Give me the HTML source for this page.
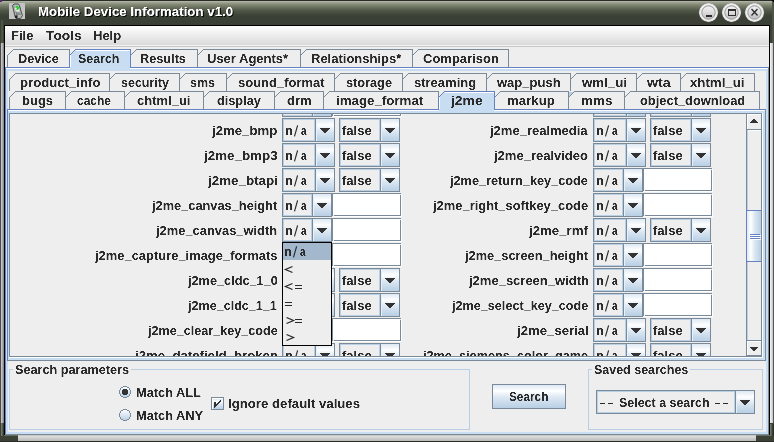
<!DOCTYPE html>
<html><head><meta charset="utf-8"><style>
html,body{margin:0;padding:0;width:774px;height:442px;overflow:hidden;background:#3c4136}
.t{position:absolute;white-space:nowrap;line-height:20px;font-family:"Liberation Sans",sans-serif;transform-origin:0 0}
.u{position:relative;top:-1px}
#vp{position:absolute;left:10px;top:114px;width:736px;height:242px;overflow:hidden}
svg{position:absolute;left:0;top:0}
</style></head><body>
<svg width="774" height="442" shape-rendering="crispEdges"><defs><linearGradient id="gTitle" x1="0" y1="0" x2="0" y2="1"><stop offset="0" stop-color="#2a2e26"/><stop offset="0.04" stop-color="#2a2e26"/><stop offset="0.04" stop-color="#b9bdb1"/><stop offset="0.08" stop-color="#a3a897"/><stop offset="0.2" stop-color="#7d8470"/><stop offset="0.4" stop-color="#535a4a"/><stop offset="0.6" stop-color="#3d4437"/><stop offset="0.68" stop-color="#3a4035"/><stop offset="1" stop-color="#3a4035"/></linearGradient><linearGradient id="gFrameL" x1="0" y1="0" x2="1" y2="0"><stop offset="0" stop-color="#cfcfcf"/><stop offset="1" stop-color="#a0a0a0"/></linearGradient><linearGradient id="gFrameR" x1="0" y1="0" x2="1" y2="0"><stop offset="0" stop-color="#f8f8f8"/><stop offset="1" stop-color="#c0c0c0"/></linearGradient><linearGradient id="gFrameB" x1="0" y1="0" x2="0" y2="1"><stop offset="0" stop-color="#a8a8a8"/><stop offset="0.15" stop-color="#e0e0e0"/><stop offset="1" stop-color="#b8b8b8"/></linearGradient><linearGradient id="gOliveL" x1="0" y1="0" x2="1" y2="0"><stop offset="0" stop-color="#7c8672"/><stop offset="1" stop-color="#4a5242"/></linearGradient><linearGradient id="gBtnIn" x1="0" y1="0" x2="0" y2="1"><stop offset="0" stop-color="#f4f4f4"/><stop offset="0.5" stop-color="#dcdcdc"/><stop offset="1" stop-color="#bcbcbc"/></linearGradient><linearGradient id="gMenu" x1="0" y1="0" x2="0" y2="1"><stop offset="0" stop-color="#ffffff"/><stop offset="1" stop-color="#dadada"/></linearGradient><linearGradient id="gOc22" x1="0" y1="0" x2="0" y2="1"><stop offset="0" stop-color="#dde8f3"/><stop offset="0.2727272727272727" stop-color="#ffffff"/><stop offset="0.5454545454545454" stop-color="#dde8f3"/><stop offset="1" stop-color="#b8cfe5"/></linearGradient><linearGradient id="gOc23" x1="0" y1="0" x2="0" y2="1"><stop offset="0" stop-color="#dde8f3"/><stop offset="0.2608695652173913" stop-color="#ffffff"/><stop offset="0.5217391304347826" stop-color="#dde8f3"/><stop offset="1" stop-color="#b8cfe5"/></linearGradient><linearGradient id="gOc21" x1="0" y1="0" x2="0" y2="1"><stop offset="0" stop-color="#dde8f3"/><stop offset="0.2857142857142857" stop-color="#ffffff"/><stop offset="0.5714285714285714" stop-color="#dde8f3"/><stop offset="1" stop-color="#b8cfe5"/></linearGradient><linearGradient id="gOcH" x1="0" y1="0" x2="1" y2="0"><stop offset="0" stop-color="#dde8f3"/><stop offset="0.26666666666666666" stop-color="#ffffff"/><stop offset="0.5333333333333333" stop-color="#dde8f3"/><stop offset="1" stop-color="#b8cfe5"/></linearGradient><linearGradient id="gOc11" x1="0" y1="0" x2="0" y2="1"><stop offset="0" stop-color="#dde8f3"/><stop offset="0.2727272727272727" stop-color="#ffffff"/><stop offset="0.5454545454545454" stop-color="#dde8f3"/><stop offset="1" stop-color="#b8cfe5"/></linearGradient><clipPath id="clipVP"><rect x="10" y="114" width="736" height="242"/></clipPath><linearGradient id="gRad" x1="0" y1="0" x2="0" y2="1"><stop offset="0" stop-color="#ffffff"/><stop offset="1" stop-color="#b8cfe5"/></linearGradient></defs><rect x="0" y="0" width="774" height="25" fill="url(#gTitle)"/><rect x="0" y="25" width="4" height="417" fill="#3c4136"/><rect x="770" y="25" width="4" height="417" fill="#3c4136"/><rect x="0" y="436" width="774" height="6" fill="#3c4136"/><rect x="0" y="43" width="1" height="380" fill="#4a4a4a"/><rect x="1" y="43" width="2" height="380" fill="url(#gFrameL)"/><rect x="3" y="43" width="1" height="380" fill="#8a8a8a"/><rect x="770" y="43" width="3" height="380" fill="url(#gFrameR)"/><rect x="773" y="43" width="1" height="380" fill="#555"/><rect x="18" y="435" width="738" height="6" fill="url(#gFrameB)"/><rect x="18" y="441" width="738" height="1" fill="#2e2e2e"/><rect x="0" y="0" width="2" height="2" fill="#5a2a6a"/><rect x="4" y="25" width="766" height="410" fill="#000"/><rect x="5" y="26" width="764" height="409" fill="#eeeeee"/><rect x="1" y="423" width="2" height="13" fill="url(#gOliveL)"/><rect x="1" y="20" width="2" height="23" fill="#4c5442"/><rect x="3" y="423" width="1" height="13" fill="#353a30"/><rect x="770" y="424" width="2" height="12" fill="url(#gOliveL)"/><rect x="773" y="424" width="1" height="12" fill="#2a2e26"/><rect x="4" y="435" width="14" height="1" fill="#667060"/><rect x="756" y="435" width="14" height="1" fill="#667060"/><rect x="0" y="441" width="774" height="1" fill="#2a2e26"/><rect x="9" y="3" width="16" height="16" fill="#c4c4c4"/><g shape-rendering="auto"><path d="M12.5 5.5 L14 4 L18.5 4 L19.5 5.5 L21.5 13 L22.5 15.5 L20.5 18.5 L16 18.5 L15 16.5 Z" fill="#b4b8b4" stroke="#4a4e4a" stroke-width="1"/><path d="M13.5 6 L15 7 L17 16 L15.5 17" fill="none" stroke="#6a6e6a" stroke-width="1"/><path d="M14.5 6 L18.5 6 L19.5 11.5 L15.5 11.5 Z" fill="#e8ece8"/><path d="M15.5 7.5 Q17 6 18.3 7.3 Q18.6 8.6 17.2 9.2 L17.2 10" fill="none" stroke="#11cc22" stroke-width="1.6"/><path d="M16 12.5 L20 12.5 L21 15 L17 15 Z" fill="#8a8e8a"/><rect x="15" y="15.5" width="2.5" height="2.5" fill="#222"/></g><radialGradient id="gBtn" cx="0.5" cy="0.5" r="0.5"><stop offset="0" stop-color="#d0d0d0"/><stop offset="0.7" stop-color="#c8c8c8"/><stop offset="0.8" stop-color="#f2f2f2"/><stop offset="0.92" stop-color="#e0e0e0"/><stop offset="1" stop-color="#808080"/></radialGradient><g shape-rendering="auto"><circle cx="708.5" cy="12.5" r="9.7" fill="url(#gBtn)"/><circle cx="708.5" cy="12.5" r="6.6" fill="url(#gBtnIn)" stroke="#a4a4a4" stroke-width="1"/></g><g shape-rendering="auto"><circle cx="731.5" cy="12.5" r="9.7" fill="url(#gBtn)"/><circle cx="731.5" cy="12.5" r="6.6" fill="url(#gBtnIn)" stroke="#a4a4a4" stroke-width="1"/></g><g shape-rendering="auto"><circle cx="754.5" cy="12.5" r="9.7" fill="url(#gBtn)"/><circle cx="754.5" cy="12.5" r="6.6" fill="url(#gBtnIn)" stroke="#a4a4a4" stroke-width="1"/></g><rect x="706" y="15" width="6" height="2" fill="#2a2a2a"/><rect x="728.5" y="9.5" width="7" height="6" fill="none" stroke="#2e2e2e" stroke-width="1"/><rect x="728" y="9" width="8" height="2" fill="#2e2e2e"/><path d="M751.5 9 L757.5 15.5 M757.5 9 L751.5 15.5" stroke="#2a2a2a" stroke-width="1.3" shape-rendering="auto"/><path d="M771 0 L774 0 L774 3 Z" fill="#000" shape-rendering="auto"/><rect x="772" y="2" width="2" height="41" fill="#4e5446"/><rect x="5" y="26" width="764" height="19" fill="url(#gMenu)"/><rect x="5" y="45" width="764" height="1" fill="#f2f2f2"/><rect x="5" y="46" width="764" height="1" fill="#c8c8c8"/><rect x="5" y="67" width="764" height="368" fill="#c8ddf2"/><rect x="5" y="67" width="764" height="1" fill="#6382bf"/><rect x="5" y="67" width="1" height="368" fill="#6382bf"/><rect x="6" y="68" width="762" height="1" fill="#ffffff"/><rect x="768" y="67" width="1" height="368" fill="#7a8a99"/><rect x="5" y="434" width="764" height="1" fill="#7a8a99"/><rect x="8" y="71" width="758" height="361" fill="#eeeeee"/><rect x="13" y="50" width="56" height="1" fill="#eeeeee"/><rect x="12" y="51" width="57" height="1" fill="#eeeeee"/><rect x="11" y="52" width="58" height="1" fill="#eeeeee"/><rect x="10" y="53" width="59" height="1" fill="#eeeeee"/><rect x="9" y="54" width="60" height="1" fill="#eeeeee"/><rect x="8" y="55" width="61" height="1" fill="#eeeeee"/><rect x="8" y="56" width="61" height="1" fill="#eeeeee"/><rect x="8" y="57" width="61" height="1" fill="#eeeeee"/><rect x="8" y="58" width="61" height="1" fill="#eeeeee"/><rect x="8" y="59" width="61" height="1" fill="#eeeeee"/><rect x="8" y="60" width="61" height="1" fill="#eeeeee"/><rect x="8" y="61" width="61" height="1" fill="#eeeeee"/><rect x="8" y="62" width="61" height="1" fill="#eeeeee"/><rect x="8" y="63" width="61" height="1" fill="#eeeeee"/><rect x="8" y="64" width="61" height="1" fill="#eeeeee"/><rect x="8" y="65" width="61" height="1" fill="#eeeeee"/><rect x="8" y="66" width="61" height="1" fill="#eeeeee"/><rect x="13" y="49" width="57" height="1" fill="#7a8a99"/><rect x="12" y="50" width="1" height="1" fill="#7a8a99"/><rect x="11" y="51" width="1" height="1" fill="#7a8a99"/><rect x="10" y="52" width="1" height="1" fill="#7a8a99"/><rect x="9" y="53" width="1" height="1" fill="#7a8a99"/><rect x="8" y="54" width="1" height="1" fill="#7a8a99"/><rect x="7" y="55" width="1" height="12" fill="#7a8a99"/><rect x="69" y="49" width="1" height="18" fill="#7a8a99"/><rect x="136" y="50" width="61" height="1" fill="#eeeeee"/><rect x="135" y="51" width="62" height="1" fill="#eeeeee"/><rect x="134" y="52" width="63" height="1" fill="#eeeeee"/><rect x="133" y="53" width="64" height="1" fill="#eeeeee"/><rect x="132" y="54" width="65" height="1" fill="#eeeeee"/><rect x="131" y="55" width="66" height="1" fill="#eeeeee"/><rect x="131" y="56" width="66" height="1" fill="#eeeeee"/><rect x="131" y="57" width="66" height="1" fill="#eeeeee"/><rect x="131" y="58" width="66" height="1" fill="#eeeeee"/><rect x="131" y="59" width="66" height="1" fill="#eeeeee"/><rect x="131" y="60" width="66" height="1" fill="#eeeeee"/><rect x="131" y="61" width="66" height="1" fill="#eeeeee"/><rect x="131" y="62" width="66" height="1" fill="#eeeeee"/><rect x="131" y="63" width="66" height="1" fill="#eeeeee"/><rect x="131" y="64" width="66" height="1" fill="#eeeeee"/><rect x="131" y="65" width="66" height="1" fill="#eeeeee"/><rect x="131" y="66" width="66" height="1" fill="#eeeeee"/><rect x="136" y="49" width="62" height="1" fill="#7a8a99"/><rect x="135" y="50" width="1" height="1" fill="#7a8a99"/><rect x="134" y="51" width="1" height="1" fill="#7a8a99"/><rect x="133" y="52" width="1" height="1" fill="#7a8a99"/><rect x="132" y="53" width="1" height="1" fill="#7a8a99"/><rect x="131" y="54" width="1" height="1" fill="#7a8a99"/><rect x="130" y="55" width="1" height="12" fill="#7a8a99"/><rect x="197" y="49" width="1" height="18" fill="#7a8a99"/><rect x="203" y="50" width="97" height="1" fill="#eeeeee"/><rect x="202" y="51" width="98" height="1" fill="#eeeeee"/><rect x="201" y="52" width="99" height="1" fill="#eeeeee"/><rect x="200" y="53" width="100" height="1" fill="#eeeeee"/><rect x="199" y="54" width="101" height="1" fill="#eeeeee"/><rect x="198" y="55" width="102" height="1" fill="#eeeeee"/><rect x="198" y="56" width="102" height="1" fill="#eeeeee"/><rect x="198" y="57" width="102" height="1" fill="#eeeeee"/><rect x="198" y="58" width="102" height="1" fill="#eeeeee"/><rect x="198" y="59" width="102" height="1" fill="#eeeeee"/><rect x="198" y="60" width="102" height="1" fill="#eeeeee"/><rect x="198" y="61" width="102" height="1" fill="#eeeeee"/><rect x="198" y="62" width="102" height="1" fill="#eeeeee"/><rect x="198" y="63" width="102" height="1" fill="#eeeeee"/><rect x="198" y="64" width="102" height="1" fill="#eeeeee"/><rect x="198" y="65" width="102" height="1" fill="#eeeeee"/><rect x="198" y="66" width="102" height="1" fill="#eeeeee"/><rect x="203" y="49" width="98" height="1" fill="#7a8a99"/><rect x="202" y="50" width="1" height="1" fill="#7a8a99"/><rect x="201" y="51" width="1" height="1" fill="#7a8a99"/><rect x="200" y="52" width="1" height="1" fill="#7a8a99"/><rect x="199" y="53" width="1" height="1" fill="#7a8a99"/><rect x="198" y="54" width="1" height="1" fill="#7a8a99"/><rect x="197" y="55" width="1" height="12" fill="#7a8a99"/><rect x="300" y="49" width="1" height="18" fill="#7a8a99"/><rect x="306" y="50" width="106" height="1" fill="#eeeeee"/><rect x="305" y="51" width="107" height="1" fill="#eeeeee"/><rect x="304" y="52" width="108" height="1" fill="#eeeeee"/><rect x="303" y="53" width="109" height="1" fill="#eeeeee"/><rect x="302" y="54" width="110" height="1" fill="#eeeeee"/><rect x="301" y="55" width="111" height="1" fill="#eeeeee"/><rect x="301" y="56" width="111" height="1" fill="#eeeeee"/><rect x="301" y="57" width="111" height="1" fill="#eeeeee"/><rect x="301" y="58" width="111" height="1" fill="#eeeeee"/><rect x="301" y="59" width="111" height="1" fill="#eeeeee"/><rect x="301" y="60" width="111" height="1" fill="#eeeeee"/><rect x="301" y="61" width="111" height="1" fill="#eeeeee"/><rect x="301" y="62" width="111" height="1" fill="#eeeeee"/><rect x="301" y="63" width="111" height="1" fill="#eeeeee"/><rect x="301" y="64" width="111" height="1" fill="#eeeeee"/><rect x="301" y="65" width="111" height="1" fill="#eeeeee"/><rect x="301" y="66" width="111" height="1" fill="#eeeeee"/><rect x="306" y="49" width="107" height="1" fill="#7a8a99"/><rect x="305" y="50" width="1" height="1" fill="#7a8a99"/><rect x="304" y="51" width="1" height="1" fill="#7a8a99"/><rect x="303" y="52" width="1" height="1" fill="#7a8a99"/><rect x="302" y="53" width="1" height="1" fill="#7a8a99"/><rect x="301" y="54" width="1" height="1" fill="#7a8a99"/><rect x="300" y="55" width="1" height="12" fill="#7a8a99"/><rect x="412" y="49" width="1" height="18" fill="#7a8a99"/><rect x="418" y="50" width="90" height="1" fill="#eeeeee"/><rect x="417" y="51" width="91" height="1" fill="#eeeeee"/><rect x="416" y="52" width="92" height="1" fill="#eeeeee"/><rect x="415" y="53" width="93" height="1" fill="#eeeeee"/><rect x="414" y="54" width="94" height="1" fill="#eeeeee"/><rect x="413" y="55" width="95" height="1" fill="#eeeeee"/><rect x="413" y="56" width="95" height="1" fill="#eeeeee"/><rect x="413" y="57" width="95" height="1" fill="#eeeeee"/><rect x="413" y="58" width="95" height="1" fill="#eeeeee"/><rect x="413" y="59" width="95" height="1" fill="#eeeeee"/><rect x="413" y="60" width="95" height="1" fill="#eeeeee"/><rect x="413" y="61" width="95" height="1" fill="#eeeeee"/><rect x="413" y="62" width="95" height="1" fill="#eeeeee"/><rect x="413" y="63" width="95" height="1" fill="#eeeeee"/><rect x="413" y="64" width="95" height="1" fill="#eeeeee"/><rect x="413" y="65" width="95" height="1" fill="#eeeeee"/><rect x="413" y="66" width="95" height="1" fill="#eeeeee"/><rect x="418" y="49" width="91" height="1" fill="#7a8a99"/><rect x="417" y="50" width="1" height="1" fill="#7a8a99"/><rect x="416" y="51" width="1" height="1" fill="#7a8a99"/><rect x="415" y="52" width="1" height="1" fill="#7a8a99"/><rect x="414" y="53" width="1" height="1" fill="#7a8a99"/><rect x="413" y="54" width="1" height="1" fill="#7a8a99"/><rect x="412" y="55" width="1" height="12" fill="#7a8a99"/><rect x="508" y="49" width="1" height="18" fill="#7a8a99"/><rect x="75" y="50" width="55" height="1" fill="#c8ddf2"/><rect x="74" y="51" width="56" height="1" fill="#c8ddf2"/><rect x="73" y="52" width="57" height="1" fill="#c8ddf2"/><rect x="72" y="53" width="58" height="1" fill="#c8ddf2"/><rect x="71" y="54" width="59" height="1" fill="#c8ddf2"/><rect x="70" y="55" width="60" height="1" fill="#c8ddf2"/><rect x="70" y="56" width="60" height="1" fill="#c8ddf2"/><rect x="70" y="57" width="60" height="1" fill="#c8ddf2"/><rect x="70" y="58" width="60" height="1" fill="#c8ddf2"/><rect x="70" y="59" width="60" height="1" fill="#c8ddf2"/><rect x="70" y="60" width="60" height="1" fill="#c8ddf2"/><rect x="70" y="61" width="60" height="1" fill="#c8ddf2"/><rect x="70" y="62" width="60" height="1" fill="#c8ddf2"/><rect x="70" y="63" width="60" height="1" fill="#c8ddf2"/><rect x="70" y="64" width="60" height="1" fill="#c8ddf2"/><rect x="70" y="65" width="60" height="1" fill="#c8ddf2"/><rect x="70" y="66" width="60" height="1" fill="#c8ddf2"/><rect x="70" y="67" width="60" height="1" fill="#c8ddf2"/><rect x="75" y="49" width="56" height="1" fill="#6382bf"/><rect x="74" y="50" width="1" height="1" fill="#6382bf"/><rect x="73" y="51" width="1" height="1" fill="#6382bf"/><rect x="72" y="52" width="1" height="1" fill="#6382bf"/><rect x="71" y="53" width="1" height="1" fill="#6382bf"/><rect x="70" y="54" width="1" height="1" fill="#6382bf"/><rect x="69" y="55" width="1" height="13" fill="#6382bf"/><rect x="130" y="49" width="1" height="19" fill="#6382bf"/><rect x="76" y="50" width="54" height="1" fill="#ffffff"/><rect x="70" y="55" width="1" height="14" fill="#ffffff"/><rect x="70" y="67" width="60" height="3" fill="#c8ddf2"/><rect x="6" y="69" width="762" height="2" fill="#c8ddf2"/><rect x="6" y="69" width="1" height="365" fill="#c8ddf2"/><rect x="766" y="69" width="1" height="365" fill="#c8ddf2"/><rect x="767" y="69" width="1" height="365" fill="#c8ddf2"/><rect x="6" y="432" width="762" height="2" fill="#c8ddf2"/><rect x="7" y="109" width="759" height="252" fill="#c8ddf2"/><rect x="7" y="109" width="759" height="1" fill="#6382bf"/><rect x="7" y="109" width="1" height="252" fill="#6382bf"/><rect x="8" y="110" width="757" height="1" fill="#ffffff"/><rect x="765" y="109" width="1" height="252" fill="#7a8a99"/><rect x="7" y="360" width="759" height="1" fill="#7a8a99"/><rect x="15" y="74" width="94" height="1" fill="#eeeeee"/><rect x="14" y="75" width="95" height="1" fill="#eeeeee"/><rect x="13" y="76" width="96" height="1" fill="#eeeeee"/><rect x="12" y="77" width="97" height="1" fill="#eeeeee"/><rect x="11" y="78" width="98" height="1" fill="#eeeeee"/><rect x="10" y="79" width="99" height="1" fill="#eeeeee"/><rect x="10" y="80" width="99" height="1" fill="#eeeeee"/><rect x="10" y="81" width="99" height="1" fill="#eeeeee"/><rect x="10" y="82" width="99" height="1" fill="#eeeeee"/><rect x="10" y="83" width="99" height="1" fill="#eeeeee"/><rect x="10" y="84" width="99" height="1" fill="#eeeeee"/><rect x="10" y="85" width="99" height="1" fill="#eeeeee"/><rect x="10" y="86" width="99" height="1" fill="#eeeeee"/><rect x="10" y="87" width="99" height="1" fill="#eeeeee"/><rect x="10" y="88" width="99" height="1" fill="#eeeeee"/><rect x="10" y="89" width="99" height="1" fill="#eeeeee"/><rect x="10" y="90" width="99" height="1" fill="#eeeeee"/><rect x="15" y="73" width="95" height="1" fill="#7a8a99"/><rect x="14" y="74" width="1" height="1" fill="#7a8a99"/><rect x="13" y="75" width="1" height="1" fill="#7a8a99"/><rect x="12" y="76" width="1" height="1" fill="#7a8a99"/><rect x="11" y="77" width="1" height="1" fill="#7a8a99"/><rect x="10" y="78" width="1" height="1" fill="#7a8a99"/><rect x="9" y="79" width="1" height="12" fill="#7a8a99"/><rect x="109" y="73" width="1" height="18" fill="#7a8a99"/><rect x="115" y="74" width="64" height="1" fill="#eeeeee"/><rect x="114" y="75" width="65" height="1" fill="#eeeeee"/><rect x="113" y="76" width="66" height="1" fill="#eeeeee"/><rect x="112" y="77" width="67" height="1" fill="#eeeeee"/><rect x="111" y="78" width="68" height="1" fill="#eeeeee"/><rect x="110" y="79" width="69" height="1" fill="#eeeeee"/><rect x="110" y="80" width="69" height="1" fill="#eeeeee"/><rect x="110" y="81" width="69" height="1" fill="#eeeeee"/><rect x="110" y="82" width="69" height="1" fill="#eeeeee"/><rect x="110" y="83" width="69" height="1" fill="#eeeeee"/><rect x="110" y="84" width="69" height="1" fill="#eeeeee"/><rect x="110" y="85" width="69" height="1" fill="#eeeeee"/><rect x="110" y="86" width="69" height="1" fill="#eeeeee"/><rect x="110" y="87" width="69" height="1" fill="#eeeeee"/><rect x="110" y="88" width="69" height="1" fill="#eeeeee"/><rect x="110" y="89" width="69" height="1" fill="#eeeeee"/><rect x="110" y="90" width="69" height="1" fill="#eeeeee"/><rect x="115" y="73" width="65" height="1" fill="#7a8a99"/><rect x="114" y="74" width="1" height="1" fill="#7a8a99"/><rect x="113" y="75" width="1" height="1" fill="#7a8a99"/><rect x="112" y="76" width="1" height="1" fill="#7a8a99"/><rect x="111" y="77" width="1" height="1" fill="#7a8a99"/><rect x="110" y="78" width="1" height="1" fill="#7a8a99"/><rect x="109" y="79" width="1" height="12" fill="#7a8a99"/><rect x="179" y="73" width="1" height="18" fill="#7a8a99"/><rect x="185" y="74" width="41" height="1" fill="#eeeeee"/><rect x="184" y="75" width="42" height="1" fill="#eeeeee"/><rect x="183" y="76" width="43" height="1" fill="#eeeeee"/><rect x="182" y="77" width="44" height="1" fill="#eeeeee"/><rect x="181" y="78" width="45" height="1" fill="#eeeeee"/><rect x="180" y="79" width="46" height="1" fill="#eeeeee"/><rect x="180" y="80" width="46" height="1" fill="#eeeeee"/><rect x="180" y="81" width="46" height="1" fill="#eeeeee"/><rect x="180" y="82" width="46" height="1" fill="#eeeeee"/><rect x="180" y="83" width="46" height="1" fill="#eeeeee"/><rect x="180" y="84" width="46" height="1" fill="#eeeeee"/><rect x="180" y="85" width="46" height="1" fill="#eeeeee"/><rect x="180" y="86" width="46" height="1" fill="#eeeeee"/><rect x="180" y="87" width="46" height="1" fill="#eeeeee"/><rect x="180" y="88" width="46" height="1" fill="#eeeeee"/><rect x="180" y="89" width="46" height="1" fill="#eeeeee"/><rect x="180" y="90" width="46" height="1" fill="#eeeeee"/><rect x="185" y="73" width="42" height="1" fill="#7a8a99"/><rect x="184" y="74" width="1" height="1" fill="#7a8a99"/><rect x="183" y="75" width="1" height="1" fill="#7a8a99"/><rect x="182" y="76" width="1" height="1" fill="#7a8a99"/><rect x="181" y="77" width="1" height="1" fill="#7a8a99"/><rect x="180" y="78" width="1" height="1" fill="#7a8a99"/><rect x="179" y="79" width="1" height="12" fill="#7a8a99"/><rect x="226" y="73" width="1" height="18" fill="#7a8a99"/><rect x="232" y="74" width="102" height="1" fill="#eeeeee"/><rect x="231" y="75" width="103" height="1" fill="#eeeeee"/><rect x="230" y="76" width="104" height="1" fill="#eeeeee"/><rect x="229" y="77" width="105" height="1" fill="#eeeeee"/><rect x="228" y="78" width="106" height="1" fill="#eeeeee"/><rect x="227" y="79" width="107" height="1" fill="#eeeeee"/><rect x="227" y="80" width="107" height="1" fill="#eeeeee"/><rect x="227" y="81" width="107" height="1" fill="#eeeeee"/><rect x="227" y="82" width="107" height="1" fill="#eeeeee"/><rect x="227" y="83" width="107" height="1" fill="#eeeeee"/><rect x="227" y="84" width="107" height="1" fill="#eeeeee"/><rect x="227" y="85" width="107" height="1" fill="#eeeeee"/><rect x="227" y="86" width="107" height="1" fill="#eeeeee"/><rect x="227" y="87" width="107" height="1" fill="#eeeeee"/><rect x="227" y="88" width="107" height="1" fill="#eeeeee"/><rect x="227" y="89" width="107" height="1" fill="#eeeeee"/><rect x="227" y="90" width="107" height="1" fill="#eeeeee"/><rect x="232" y="73" width="103" height="1" fill="#7a8a99"/><rect x="231" y="74" width="1" height="1" fill="#7a8a99"/><rect x="230" y="75" width="1" height="1" fill="#7a8a99"/><rect x="229" y="76" width="1" height="1" fill="#7a8a99"/><rect x="228" y="77" width="1" height="1" fill="#7a8a99"/><rect x="227" y="78" width="1" height="1" fill="#7a8a99"/><rect x="226" y="79" width="1" height="12" fill="#7a8a99"/><rect x="334" y="73" width="1" height="18" fill="#7a8a99"/><rect x="340" y="74" width="62" height="1" fill="#eeeeee"/><rect x="339" y="75" width="63" height="1" fill="#eeeeee"/><rect x="338" y="76" width="64" height="1" fill="#eeeeee"/><rect x="337" y="77" width="65" height="1" fill="#eeeeee"/><rect x="336" y="78" width="66" height="1" fill="#eeeeee"/><rect x="335" y="79" width="67" height="1" fill="#eeeeee"/><rect x="335" y="80" width="67" height="1" fill="#eeeeee"/><rect x="335" y="81" width="67" height="1" fill="#eeeeee"/><rect x="335" y="82" width="67" height="1" fill="#eeeeee"/><rect x="335" y="83" width="67" height="1" fill="#eeeeee"/><rect x="335" y="84" width="67" height="1" fill="#eeeeee"/><rect x="335" y="85" width="67" height="1" fill="#eeeeee"/><rect x="335" y="86" width="67" height="1" fill="#eeeeee"/><rect x="335" y="87" width="67" height="1" fill="#eeeeee"/><rect x="335" y="88" width="67" height="1" fill="#eeeeee"/><rect x="335" y="89" width="67" height="1" fill="#eeeeee"/><rect x="335" y="90" width="67" height="1" fill="#eeeeee"/><rect x="340" y="73" width="63" height="1" fill="#7a8a99"/><rect x="339" y="74" width="1" height="1" fill="#7a8a99"/><rect x="338" y="75" width="1" height="1" fill="#7a8a99"/><rect x="337" y="76" width="1" height="1" fill="#7a8a99"/><rect x="336" y="77" width="1" height="1" fill="#7a8a99"/><rect x="335" y="78" width="1" height="1" fill="#7a8a99"/><rect x="334" y="79" width="1" height="12" fill="#7a8a99"/><rect x="402" y="73" width="1" height="18" fill="#7a8a99"/><rect x="408" y="74" width="78" height="1" fill="#eeeeee"/><rect x="407" y="75" width="79" height="1" fill="#eeeeee"/><rect x="406" y="76" width="80" height="1" fill="#eeeeee"/><rect x="405" y="77" width="81" height="1" fill="#eeeeee"/><rect x="404" y="78" width="82" height="1" fill="#eeeeee"/><rect x="403" y="79" width="83" height="1" fill="#eeeeee"/><rect x="403" y="80" width="83" height="1" fill="#eeeeee"/><rect x="403" y="81" width="83" height="1" fill="#eeeeee"/><rect x="403" y="82" width="83" height="1" fill="#eeeeee"/><rect x="403" y="83" width="83" height="1" fill="#eeeeee"/><rect x="403" y="84" width="83" height="1" fill="#eeeeee"/><rect x="403" y="85" width="83" height="1" fill="#eeeeee"/><rect x="403" y="86" width="83" height="1" fill="#eeeeee"/><rect x="403" y="87" width="83" height="1" fill="#eeeeee"/><rect x="403" y="88" width="83" height="1" fill="#eeeeee"/><rect x="403" y="89" width="83" height="1" fill="#eeeeee"/><rect x="403" y="90" width="83" height="1" fill="#eeeeee"/><rect x="408" y="73" width="79" height="1" fill="#7a8a99"/><rect x="407" y="74" width="1" height="1" fill="#7a8a99"/><rect x="406" y="75" width="1" height="1" fill="#7a8a99"/><rect x="405" y="76" width="1" height="1" fill="#7a8a99"/><rect x="404" y="77" width="1" height="1" fill="#7a8a99"/><rect x="403" y="78" width="1" height="1" fill="#7a8a99"/><rect x="402" y="79" width="1" height="12" fill="#7a8a99"/><rect x="486" y="73" width="1" height="18" fill="#7a8a99"/><rect x="492" y="74" width="78" height="1" fill="#eeeeee"/><rect x="491" y="75" width="79" height="1" fill="#eeeeee"/><rect x="490" y="76" width="80" height="1" fill="#eeeeee"/><rect x="489" y="77" width="81" height="1" fill="#eeeeee"/><rect x="488" y="78" width="82" height="1" fill="#eeeeee"/><rect x="487" y="79" width="83" height="1" fill="#eeeeee"/><rect x="487" y="80" width="83" height="1" fill="#eeeeee"/><rect x="487" y="81" width="83" height="1" fill="#eeeeee"/><rect x="487" y="82" width="83" height="1" fill="#eeeeee"/><rect x="487" y="83" width="83" height="1" fill="#eeeeee"/><rect x="487" y="84" width="83" height="1" fill="#eeeeee"/><rect x="487" y="85" width="83" height="1" fill="#eeeeee"/><rect x="487" y="86" width="83" height="1" fill="#eeeeee"/><rect x="487" y="87" width="83" height="1" fill="#eeeeee"/><rect x="487" y="88" width="83" height="1" fill="#eeeeee"/><rect x="487" y="89" width="83" height="1" fill="#eeeeee"/><rect x="487" y="90" width="83" height="1" fill="#eeeeee"/><rect x="492" y="73" width="79" height="1" fill="#7a8a99"/><rect x="491" y="74" width="1" height="1" fill="#7a8a99"/><rect x="490" y="75" width="1" height="1" fill="#7a8a99"/><rect x="489" y="76" width="1" height="1" fill="#7a8a99"/><rect x="488" y="77" width="1" height="1" fill="#7a8a99"/><rect x="487" y="78" width="1" height="1" fill="#7a8a99"/><rect x="486" y="79" width="1" height="12" fill="#7a8a99"/><rect x="570" y="73" width="1" height="18" fill="#7a8a99"/><rect x="576" y="74" width="60" height="1" fill="#eeeeee"/><rect x="575" y="75" width="61" height="1" fill="#eeeeee"/><rect x="574" y="76" width="62" height="1" fill="#eeeeee"/><rect x="573" y="77" width="63" height="1" fill="#eeeeee"/><rect x="572" y="78" width="64" height="1" fill="#eeeeee"/><rect x="571" y="79" width="65" height="1" fill="#eeeeee"/><rect x="571" y="80" width="65" height="1" fill="#eeeeee"/><rect x="571" y="81" width="65" height="1" fill="#eeeeee"/><rect x="571" y="82" width="65" height="1" fill="#eeeeee"/><rect x="571" y="83" width="65" height="1" fill="#eeeeee"/><rect x="571" y="84" width="65" height="1" fill="#eeeeee"/><rect x="571" y="85" width="65" height="1" fill="#eeeeee"/><rect x="571" y="86" width="65" height="1" fill="#eeeeee"/><rect x="571" y="87" width="65" height="1" fill="#eeeeee"/><rect x="571" y="88" width="65" height="1" fill="#eeeeee"/><rect x="571" y="89" width="65" height="1" fill="#eeeeee"/><rect x="571" y="90" width="65" height="1" fill="#eeeeee"/><rect x="576" y="73" width="61" height="1" fill="#7a8a99"/><rect x="575" y="74" width="1" height="1" fill="#7a8a99"/><rect x="574" y="75" width="1" height="1" fill="#7a8a99"/><rect x="573" y="76" width="1" height="1" fill="#7a8a99"/><rect x="572" y="77" width="1" height="1" fill="#7a8a99"/><rect x="571" y="78" width="1" height="1" fill="#7a8a99"/><rect x="570" y="79" width="1" height="12" fill="#7a8a99"/><rect x="636" y="73" width="1" height="18" fill="#7a8a99"/><rect x="642" y="74" width="38" height="1" fill="#eeeeee"/><rect x="641" y="75" width="39" height="1" fill="#eeeeee"/><rect x="640" y="76" width="40" height="1" fill="#eeeeee"/><rect x="639" y="77" width="41" height="1" fill="#eeeeee"/><rect x="638" y="78" width="42" height="1" fill="#eeeeee"/><rect x="637" y="79" width="43" height="1" fill="#eeeeee"/><rect x="637" y="80" width="43" height="1" fill="#eeeeee"/><rect x="637" y="81" width="43" height="1" fill="#eeeeee"/><rect x="637" y="82" width="43" height="1" fill="#eeeeee"/><rect x="637" y="83" width="43" height="1" fill="#eeeeee"/><rect x="637" y="84" width="43" height="1" fill="#eeeeee"/><rect x="637" y="85" width="43" height="1" fill="#eeeeee"/><rect x="637" y="86" width="43" height="1" fill="#eeeeee"/><rect x="637" y="87" width="43" height="1" fill="#eeeeee"/><rect x="637" y="88" width="43" height="1" fill="#eeeeee"/><rect x="637" y="89" width="43" height="1" fill="#eeeeee"/><rect x="637" y="90" width="43" height="1" fill="#eeeeee"/><rect x="642" y="73" width="39" height="1" fill="#7a8a99"/><rect x="641" y="74" width="1" height="1" fill="#7a8a99"/><rect x="640" y="75" width="1" height="1" fill="#7a8a99"/><rect x="639" y="76" width="1" height="1" fill="#7a8a99"/><rect x="638" y="77" width="1" height="1" fill="#7a8a99"/><rect x="637" y="78" width="1" height="1" fill="#7a8a99"/><rect x="636" y="79" width="1" height="12" fill="#7a8a99"/><rect x="680" y="73" width="1" height="18" fill="#7a8a99"/><rect x="686" y="74" width="68" height="1" fill="#eeeeee"/><rect x="685" y="75" width="69" height="1" fill="#eeeeee"/><rect x="684" y="76" width="70" height="1" fill="#eeeeee"/><rect x="683" y="77" width="71" height="1" fill="#eeeeee"/><rect x="682" y="78" width="72" height="1" fill="#eeeeee"/><rect x="681" y="79" width="73" height="1" fill="#eeeeee"/><rect x="681" y="80" width="73" height="1" fill="#eeeeee"/><rect x="681" y="81" width="73" height="1" fill="#eeeeee"/><rect x="681" y="82" width="73" height="1" fill="#eeeeee"/><rect x="681" y="83" width="73" height="1" fill="#eeeeee"/><rect x="681" y="84" width="73" height="1" fill="#eeeeee"/><rect x="681" y="85" width="73" height="1" fill="#eeeeee"/><rect x="681" y="86" width="73" height="1" fill="#eeeeee"/><rect x="681" y="87" width="73" height="1" fill="#eeeeee"/><rect x="681" y="88" width="73" height="1" fill="#eeeeee"/><rect x="681" y="89" width="73" height="1" fill="#eeeeee"/><rect x="681" y="90" width="73" height="1" fill="#eeeeee"/><rect x="686" y="73" width="69" height="1" fill="#7a8a99"/><rect x="685" y="74" width="1" height="1" fill="#7a8a99"/><rect x="684" y="75" width="1" height="1" fill="#7a8a99"/><rect x="683" y="76" width="1" height="1" fill="#7a8a99"/><rect x="682" y="77" width="1" height="1" fill="#7a8a99"/><rect x="681" y="78" width="1" height="1" fill="#7a8a99"/><rect x="680" y="79" width="1" height="12" fill="#7a8a99"/><rect x="754" y="73" width="1" height="18" fill="#7a8a99"/><rect x="15" y="92" width="50" height="1" fill="#eeeeee"/><rect x="14" y="93" width="51" height="1" fill="#eeeeee"/><rect x="13" y="94" width="52" height="1" fill="#eeeeee"/><rect x="12" y="95" width="53" height="1" fill="#eeeeee"/><rect x="11" y="96" width="54" height="1" fill="#eeeeee"/><rect x="10" y="97" width="55" height="1" fill="#eeeeee"/><rect x="10" y="98" width="55" height="1" fill="#eeeeee"/><rect x="10" y="99" width="55" height="1" fill="#eeeeee"/><rect x="10" y="100" width="55" height="1" fill="#eeeeee"/><rect x="10" y="101" width="55" height="1" fill="#eeeeee"/><rect x="10" y="102" width="55" height="1" fill="#eeeeee"/><rect x="10" y="103" width="55" height="1" fill="#eeeeee"/><rect x="10" y="104" width="55" height="1" fill="#eeeeee"/><rect x="10" y="105" width="55" height="1" fill="#eeeeee"/><rect x="10" y="106" width="55" height="1" fill="#eeeeee"/><rect x="10" y="107" width="55" height="1" fill="#eeeeee"/><rect x="10" y="108" width="55" height="1" fill="#eeeeee"/><rect x="15" y="91" width="51" height="1" fill="#7a8a99"/><rect x="14" y="92" width="1" height="1" fill="#7a8a99"/><rect x="13" y="93" width="1" height="1" fill="#7a8a99"/><rect x="12" y="94" width="1" height="1" fill="#7a8a99"/><rect x="11" y="95" width="1" height="1" fill="#7a8a99"/><rect x="10" y="96" width="1" height="1" fill="#7a8a99"/><rect x="9" y="97" width="1" height="12" fill="#7a8a99"/><rect x="65" y="91" width="1" height="18" fill="#7a8a99"/><rect x="71" y="92" width="53" height="1" fill="#eeeeee"/><rect x="70" y="93" width="54" height="1" fill="#eeeeee"/><rect x="69" y="94" width="55" height="1" fill="#eeeeee"/><rect x="68" y="95" width="56" height="1" fill="#eeeeee"/><rect x="67" y="96" width="57" height="1" fill="#eeeeee"/><rect x="66" y="97" width="58" height="1" fill="#eeeeee"/><rect x="66" y="98" width="58" height="1" fill="#eeeeee"/><rect x="66" y="99" width="58" height="1" fill="#eeeeee"/><rect x="66" y="100" width="58" height="1" fill="#eeeeee"/><rect x="66" y="101" width="58" height="1" fill="#eeeeee"/><rect x="66" y="102" width="58" height="1" fill="#eeeeee"/><rect x="66" y="103" width="58" height="1" fill="#eeeeee"/><rect x="66" y="104" width="58" height="1" fill="#eeeeee"/><rect x="66" y="105" width="58" height="1" fill="#eeeeee"/><rect x="66" y="106" width="58" height="1" fill="#eeeeee"/><rect x="66" y="107" width="58" height="1" fill="#eeeeee"/><rect x="66" y="108" width="58" height="1" fill="#eeeeee"/><rect x="71" y="91" width="54" height="1" fill="#7a8a99"/><rect x="70" y="92" width="1" height="1" fill="#7a8a99"/><rect x="69" y="93" width="1" height="1" fill="#7a8a99"/><rect x="68" y="94" width="1" height="1" fill="#7a8a99"/><rect x="67" y="95" width="1" height="1" fill="#7a8a99"/><rect x="66" y="96" width="1" height="1" fill="#7a8a99"/><rect x="65" y="97" width="1" height="12" fill="#7a8a99"/><rect x="124" y="91" width="1" height="18" fill="#7a8a99"/><rect x="130" y="92" width="73" height="1" fill="#eeeeee"/><rect x="129" y="93" width="74" height="1" fill="#eeeeee"/><rect x="128" y="94" width="75" height="1" fill="#eeeeee"/><rect x="127" y="95" width="76" height="1" fill="#eeeeee"/><rect x="126" y="96" width="77" height="1" fill="#eeeeee"/><rect x="125" y="97" width="78" height="1" fill="#eeeeee"/><rect x="125" y="98" width="78" height="1" fill="#eeeeee"/><rect x="125" y="99" width="78" height="1" fill="#eeeeee"/><rect x="125" y="100" width="78" height="1" fill="#eeeeee"/><rect x="125" y="101" width="78" height="1" fill="#eeeeee"/><rect x="125" y="102" width="78" height="1" fill="#eeeeee"/><rect x="125" y="103" width="78" height="1" fill="#eeeeee"/><rect x="125" y="104" width="78" height="1" fill="#eeeeee"/><rect x="125" y="105" width="78" height="1" fill="#eeeeee"/><rect x="125" y="106" width="78" height="1" fill="#eeeeee"/><rect x="125" y="107" width="78" height="1" fill="#eeeeee"/><rect x="125" y="108" width="78" height="1" fill="#eeeeee"/><rect x="130" y="91" width="74" height="1" fill="#7a8a99"/><rect x="129" y="92" width="1" height="1" fill="#7a8a99"/><rect x="128" y="93" width="1" height="1" fill="#7a8a99"/><rect x="127" y="94" width="1" height="1" fill="#7a8a99"/><rect x="126" y="95" width="1" height="1" fill="#7a8a99"/><rect x="125" y="96" width="1" height="1" fill="#7a8a99"/><rect x="124" y="97" width="1" height="12" fill="#7a8a99"/><rect x="203" y="91" width="1" height="18" fill="#7a8a99"/><rect x="209" y="92" width="65" height="1" fill="#eeeeee"/><rect x="208" y="93" width="66" height="1" fill="#eeeeee"/><rect x="207" y="94" width="67" height="1" fill="#eeeeee"/><rect x="206" y="95" width="68" height="1" fill="#eeeeee"/><rect x="205" y="96" width="69" height="1" fill="#eeeeee"/><rect x="204" y="97" width="70" height="1" fill="#eeeeee"/><rect x="204" y="98" width="70" height="1" fill="#eeeeee"/><rect x="204" y="99" width="70" height="1" fill="#eeeeee"/><rect x="204" y="100" width="70" height="1" fill="#eeeeee"/><rect x="204" y="101" width="70" height="1" fill="#eeeeee"/><rect x="204" y="102" width="70" height="1" fill="#eeeeee"/><rect x="204" y="103" width="70" height="1" fill="#eeeeee"/><rect x="204" y="104" width="70" height="1" fill="#eeeeee"/><rect x="204" y="105" width="70" height="1" fill="#eeeeee"/><rect x="204" y="106" width="70" height="1" fill="#eeeeee"/><rect x="204" y="107" width="70" height="1" fill="#eeeeee"/><rect x="204" y="108" width="70" height="1" fill="#eeeeee"/><rect x="209" y="91" width="66" height="1" fill="#7a8a99"/><rect x="208" y="92" width="1" height="1" fill="#7a8a99"/><rect x="207" y="93" width="1" height="1" fill="#7a8a99"/><rect x="206" y="94" width="1" height="1" fill="#7a8a99"/><rect x="205" y="95" width="1" height="1" fill="#7a8a99"/><rect x="204" y="96" width="1" height="1" fill="#7a8a99"/><rect x="203" y="97" width="1" height="12" fill="#7a8a99"/><rect x="274" y="91" width="1" height="18" fill="#7a8a99"/><rect x="280" y="92" width="43" height="1" fill="#eeeeee"/><rect x="279" y="93" width="44" height="1" fill="#eeeeee"/><rect x="278" y="94" width="45" height="1" fill="#eeeeee"/><rect x="277" y="95" width="46" height="1" fill="#eeeeee"/><rect x="276" y="96" width="47" height="1" fill="#eeeeee"/><rect x="275" y="97" width="48" height="1" fill="#eeeeee"/><rect x="275" y="98" width="48" height="1" fill="#eeeeee"/><rect x="275" y="99" width="48" height="1" fill="#eeeeee"/><rect x="275" y="100" width="48" height="1" fill="#eeeeee"/><rect x="275" y="101" width="48" height="1" fill="#eeeeee"/><rect x="275" y="102" width="48" height="1" fill="#eeeeee"/><rect x="275" y="103" width="48" height="1" fill="#eeeeee"/><rect x="275" y="104" width="48" height="1" fill="#eeeeee"/><rect x="275" y="105" width="48" height="1" fill="#eeeeee"/><rect x="275" y="106" width="48" height="1" fill="#eeeeee"/><rect x="275" y="107" width="48" height="1" fill="#eeeeee"/><rect x="275" y="108" width="48" height="1" fill="#eeeeee"/><rect x="280" y="91" width="44" height="1" fill="#7a8a99"/><rect x="279" y="92" width="1" height="1" fill="#7a8a99"/><rect x="278" y="93" width="1" height="1" fill="#7a8a99"/><rect x="277" y="94" width="1" height="1" fill="#7a8a99"/><rect x="276" y="95" width="1" height="1" fill="#7a8a99"/><rect x="275" y="96" width="1" height="1" fill="#7a8a99"/><rect x="274" y="97" width="1" height="12" fill="#7a8a99"/><rect x="323" y="91" width="1" height="18" fill="#7a8a99"/><rect x="329" y="92" width="109" height="1" fill="#eeeeee"/><rect x="328" y="93" width="110" height="1" fill="#eeeeee"/><rect x="327" y="94" width="111" height="1" fill="#eeeeee"/><rect x="326" y="95" width="112" height="1" fill="#eeeeee"/><rect x="325" y="96" width="113" height="1" fill="#eeeeee"/><rect x="324" y="97" width="114" height="1" fill="#eeeeee"/><rect x="324" y="98" width="114" height="1" fill="#eeeeee"/><rect x="324" y="99" width="114" height="1" fill="#eeeeee"/><rect x="324" y="100" width="114" height="1" fill="#eeeeee"/><rect x="324" y="101" width="114" height="1" fill="#eeeeee"/><rect x="324" y="102" width="114" height="1" fill="#eeeeee"/><rect x="324" y="103" width="114" height="1" fill="#eeeeee"/><rect x="324" y="104" width="114" height="1" fill="#eeeeee"/><rect x="324" y="105" width="114" height="1" fill="#eeeeee"/><rect x="324" y="106" width="114" height="1" fill="#eeeeee"/><rect x="324" y="107" width="114" height="1" fill="#eeeeee"/><rect x="324" y="108" width="114" height="1" fill="#eeeeee"/><rect x="329" y="91" width="110" height="1" fill="#7a8a99"/><rect x="328" y="92" width="1" height="1" fill="#7a8a99"/><rect x="327" y="93" width="1" height="1" fill="#7a8a99"/><rect x="326" y="94" width="1" height="1" fill="#7a8a99"/><rect x="325" y="95" width="1" height="1" fill="#7a8a99"/><rect x="324" y="96" width="1" height="1" fill="#7a8a99"/><rect x="323" y="97" width="1" height="12" fill="#7a8a99"/><rect x="438" y="91" width="1" height="18" fill="#7a8a99"/><rect x="500" y="92" width="68" height="1" fill="#eeeeee"/><rect x="499" y="93" width="69" height="1" fill="#eeeeee"/><rect x="498" y="94" width="70" height="1" fill="#eeeeee"/><rect x="497" y="95" width="71" height="1" fill="#eeeeee"/><rect x="496" y="96" width="72" height="1" fill="#eeeeee"/><rect x="495" y="97" width="73" height="1" fill="#eeeeee"/><rect x="495" y="98" width="73" height="1" fill="#eeeeee"/><rect x="495" y="99" width="73" height="1" fill="#eeeeee"/><rect x="495" y="100" width="73" height="1" fill="#eeeeee"/><rect x="495" y="101" width="73" height="1" fill="#eeeeee"/><rect x="495" y="102" width="73" height="1" fill="#eeeeee"/><rect x="495" y="103" width="73" height="1" fill="#eeeeee"/><rect x="495" y="104" width="73" height="1" fill="#eeeeee"/><rect x="495" y="105" width="73" height="1" fill="#eeeeee"/><rect x="495" y="106" width="73" height="1" fill="#eeeeee"/><rect x="495" y="107" width="73" height="1" fill="#eeeeee"/><rect x="495" y="108" width="73" height="1" fill="#eeeeee"/><rect x="500" y="91" width="69" height="1" fill="#7a8a99"/><rect x="499" y="92" width="1" height="1" fill="#7a8a99"/><rect x="498" y="93" width="1" height="1" fill="#7a8a99"/><rect x="497" y="94" width="1" height="1" fill="#7a8a99"/><rect x="496" y="95" width="1" height="1" fill="#7a8a99"/><rect x="495" y="96" width="1" height="1" fill="#7a8a99"/><rect x="494" y="97" width="1" height="12" fill="#7a8a99"/><rect x="568" y="91" width="1" height="18" fill="#7a8a99"/><rect x="574" y="92" width="50" height="1" fill="#eeeeee"/><rect x="573" y="93" width="51" height="1" fill="#eeeeee"/><rect x="572" y="94" width="52" height="1" fill="#eeeeee"/><rect x="571" y="95" width="53" height="1" fill="#eeeeee"/><rect x="570" y="96" width="54" height="1" fill="#eeeeee"/><rect x="569" y="97" width="55" height="1" fill="#eeeeee"/><rect x="569" y="98" width="55" height="1" fill="#eeeeee"/><rect x="569" y="99" width="55" height="1" fill="#eeeeee"/><rect x="569" y="100" width="55" height="1" fill="#eeeeee"/><rect x="569" y="101" width="55" height="1" fill="#eeeeee"/><rect x="569" y="102" width="55" height="1" fill="#eeeeee"/><rect x="569" y="103" width="55" height="1" fill="#eeeeee"/><rect x="569" y="104" width="55" height="1" fill="#eeeeee"/><rect x="569" y="105" width="55" height="1" fill="#eeeeee"/><rect x="569" y="106" width="55" height="1" fill="#eeeeee"/><rect x="569" y="107" width="55" height="1" fill="#eeeeee"/><rect x="569" y="108" width="55" height="1" fill="#eeeeee"/><rect x="574" y="91" width="51" height="1" fill="#7a8a99"/><rect x="573" y="92" width="1" height="1" fill="#7a8a99"/><rect x="572" y="93" width="1" height="1" fill="#7a8a99"/><rect x="571" y="94" width="1" height="1" fill="#7a8a99"/><rect x="570" y="95" width="1" height="1" fill="#7a8a99"/><rect x="569" y="96" width="1" height="1" fill="#7a8a99"/><rect x="568" y="97" width="1" height="12" fill="#7a8a99"/><rect x="624" y="91" width="1" height="18" fill="#7a8a99"/><rect x="630" y="92" width="129" height="1" fill="#eeeeee"/><rect x="629" y="93" width="130" height="1" fill="#eeeeee"/><rect x="628" y="94" width="131" height="1" fill="#eeeeee"/><rect x="627" y="95" width="132" height="1" fill="#eeeeee"/><rect x="626" y="96" width="133" height="1" fill="#eeeeee"/><rect x="625" y="97" width="134" height="1" fill="#eeeeee"/><rect x="625" y="98" width="134" height="1" fill="#eeeeee"/><rect x="625" y="99" width="134" height="1" fill="#eeeeee"/><rect x="625" y="100" width="134" height="1" fill="#eeeeee"/><rect x="625" y="101" width="134" height="1" fill="#eeeeee"/><rect x="625" y="102" width="134" height="1" fill="#eeeeee"/><rect x="625" y="103" width="134" height="1" fill="#eeeeee"/><rect x="625" y="104" width="134" height="1" fill="#eeeeee"/><rect x="625" y="105" width="134" height="1" fill="#eeeeee"/><rect x="625" y="106" width="134" height="1" fill="#eeeeee"/><rect x="625" y="107" width="134" height="1" fill="#eeeeee"/><rect x="625" y="108" width="134" height="1" fill="#eeeeee"/><rect x="630" y="91" width="130" height="1" fill="#7a8a99"/><rect x="629" y="92" width="1" height="1" fill="#7a8a99"/><rect x="628" y="93" width="1" height="1" fill="#7a8a99"/><rect x="627" y="94" width="1" height="1" fill="#7a8a99"/><rect x="626" y="95" width="1" height="1" fill="#7a8a99"/><rect x="625" y="96" width="1" height="1" fill="#7a8a99"/><rect x="624" y="97" width="1" height="12" fill="#7a8a99"/><rect x="759" y="91" width="1" height="18" fill="#7a8a99"/><rect x="444" y="92" width="50" height="1" fill="#c8ddf2"/><rect x="443" y="93" width="51" height="1" fill="#c8ddf2"/><rect x="442" y="94" width="52" height="1" fill="#c8ddf2"/><rect x="441" y="95" width="53" height="1" fill="#c8ddf2"/><rect x="440" y="96" width="54" height="1" fill="#c8ddf2"/><rect x="439" y="97" width="55" height="1" fill="#c8ddf2"/><rect x="439" y="98" width="55" height="1" fill="#c8ddf2"/><rect x="439" y="99" width="55" height="1" fill="#c8ddf2"/><rect x="439" y="100" width="55" height="1" fill="#c8ddf2"/><rect x="439" y="101" width="55" height="1" fill="#c8ddf2"/><rect x="439" y="102" width="55" height="1" fill="#c8ddf2"/><rect x="439" y="103" width="55" height="1" fill="#c8ddf2"/><rect x="439" y="104" width="55" height="1" fill="#c8ddf2"/><rect x="439" y="105" width="55" height="1" fill="#c8ddf2"/><rect x="439" y="106" width="55" height="1" fill="#c8ddf2"/><rect x="439" y="107" width="55" height="1" fill="#c8ddf2"/><rect x="439" y="108" width="55" height="1" fill="#c8ddf2"/><rect x="439" y="109" width="55" height="1" fill="#c8ddf2"/><rect x="444" y="91" width="51" height="1" fill="#6382bf"/><rect x="443" y="92" width="1" height="1" fill="#6382bf"/><rect x="442" y="93" width="1" height="1" fill="#6382bf"/><rect x="441" y="94" width="1" height="1" fill="#6382bf"/><rect x="440" y="95" width="1" height="1" fill="#6382bf"/><rect x="439" y="96" width="1" height="1" fill="#6382bf"/><rect x="438" y="97" width="1" height="13" fill="#6382bf"/><rect x="494" y="91" width="1" height="19" fill="#6382bf"/><rect x="445" y="92" width="49" height="1" fill="#ffffff"/><rect x="439" y="97" width="1" height="14" fill="#ffffff"/><rect x="439" y="109" width="55" height="2" fill="#c8ddf2"/><rect x="569" y="92" width="4" height="1" fill="#b8cfe5"/><rect x="569" y="93" width="3" height="1" fill="#b8cfe5"/><rect x="569" y="94" width="2" height="1" fill="#b8cfe5"/><rect x="569" y="95" width="1" height="1" fill="#b8cfe5"/><rect x="9" y="113" width="754" height="245" fill="#ffffff"/><rect x="9" y="113" width="753" height="1" fill="#7a8a99"/><rect x="9" y="356" width="753" height="1" fill="#7a8a99"/><rect x="9" y="113" width="1" height="244" fill="#7a8a99"/><rect x="761" y="113" width="1" height="244" fill="#7a8a99"/><rect x="10" y="114" width="751" height="242" fill="#eeeeee"/><g clip-path="url(#clipVP)"><rect x="282" y="93" width="50" height="24" fill="#7a8a99"/><rect x="283" y="94" width="29" height="22" fill="#b8cfe5"/><rect x="284" y="95" width="27" height="20" fill="#eeeeee"/><rect x="313" y="94" width="18" height="22" fill="url(#gOc22)"/><rect x="313" y="94" width="1" height="22" fill="#e8f0f8"/><rect x="317" y="103" width="10" height="1" fill="#333"/><rect x="318" y="104" width="8" height="1" fill="#333"/><rect x="319" y="105" width="6" height="1" fill="#333"/><rect x="320" y="106" width="4" height="1" fill="#333"/><rect x="321" y="107" width="2" height="1" fill="#333"/><rect x="332" y="93" width="70" height="24" fill="#ffffff"/><rect x="332" y="93" width="69" height="1" fill="#7a8a99"/><rect x="332" y="115" width="69" height="1" fill="#7a8a99"/><rect x="332" y="93" width="1" height="23" fill="#7a8a99"/><rect x="400" y="93" width="1" height="23" fill="#7a8a99"/><rect x="333" y="94" width="69" height="1" fill="#ffffff"/><rect x="333" y="116" width="69" height="1" fill="#ffffff"/><rect x="333" y="94" width="1" height="23" fill="#ffffff"/><rect x="401" y="94" width="1" height="23" fill="#ffffff"/><rect x="332" y="116" width="1" height="1" fill="#eeeeee"/><rect x="333" y="115" width="1" height="1" fill="#eeeeee"/><rect x="401" y="93" width="1" height="1" fill="#eeeeee"/><rect x="400" y="94" width="1" height="1" fill="#eeeeee"/><path d="M294.5 111.3 L297.6 100.4" stroke="#2a2a2a" stroke-width="1.15" shape-rendering="auto"/><rect x="282" y="118" width="53" height="24" fill="#7a8a99"/><rect x="283" y="119" width="32" height="22" fill="#b8cfe5"/><rect x="284" y="120" width="30" height="20" fill="#eeeeee"/><rect x="316" y="119" width="18" height="22" fill="url(#gOc22)"/><rect x="316" y="119" width="1" height="22" fill="#e8f0f8"/><rect x="320" y="128" width="10" height="1" fill="#333"/><rect x="321" y="129" width="8" height="1" fill="#333"/><rect x="322" y="130" width="6" height="1" fill="#333"/><rect x="323" y="131" width="4" height="1" fill="#333"/><rect x="324" y="132" width="2" height="1" fill="#333"/><rect x="339" y="118" width="61" height="24" fill="#7a8a99"/><rect x="340" y="119" width="40" height="22" fill="#b8cfe5"/><rect x="341" y="120" width="38" height="20" fill="#eeeeee"/><rect x="381" y="119" width="18" height="22" fill="url(#gOc22)"/><rect x="381" y="119" width="1" height="22" fill="#e8f0f8"/><rect x="385" y="128" width="10" height="1" fill="#333"/><rect x="386" y="129" width="8" height="1" fill="#333"/><rect x="387" y="130" width="6" height="1" fill="#333"/><rect x="388" y="131" width="4" height="1" fill="#333"/><rect x="389" y="132" width="2" height="1" fill="#333"/><path d="M294.5 136.3 L297.6 125.4" stroke="#2a2a2a" stroke-width="1.15" shape-rendering="auto"/><rect x="282" y="143" width="53" height="24" fill="#7a8a99"/><rect x="283" y="144" width="32" height="22" fill="#b8cfe5"/><rect x="284" y="145" width="30" height="20" fill="#eeeeee"/><rect x="316" y="144" width="18" height="22" fill="url(#gOc22)"/><rect x="316" y="144" width="1" height="22" fill="#e8f0f8"/><rect x="320" y="153" width="10" height="1" fill="#333"/><rect x="321" y="154" width="8" height="1" fill="#333"/><rect x="322" y="155" width="6" height="1" fill="#333"/><rect x="323" y="156" width="4" height="1" fill="#333"/><rect x="324" y="157" width="2" height="1" fill="#333"/><rect x="339" y="143" width="61" height="24" fill="#7a8a99"/><rect x="340" y="144" width="40" height="22" fill="#b8cfe5"/><rect x="341" y="145" width="38" height="20" fill="#eeeeee"/><rect x="381" y="144" width="18" height="22" fill="url(#gOc22)"/><rect x="381" y="144" width="1" height="22" fill="#e8f0f8"/><rect x="385" y="153" width="10" height="1" fill="#333"/><rect x="386" y="154" width="8" height="1" fill="#333"/><rect x="387" y="155" width="6" height="1" fill="#333"/><rect x="388" y="156" width="4" height="1" fill="#333"/><rect x="389" y="157" width="2" height="1" fill="#333"/><path d="M294.5 161.3 L297.6 150.4" stroke="#2a2a2a" stroke-width="1.15" shape-rendering="auto"/><rect x="282" y="168" width="53" height="24" fill="#7a8a99"/><rect x="283" y="169" width="32" height="22" fill="#b8cfe5"/><rect x="284" y="170" width="30" height="20" fill="#eeeeee"/><rect x="316" y="169" width="18" height="22" fill="url(#gOc22)"/><rect x="316" y="169" width="1" height="22" fill="#e8f0f8"/><rect x="320" y="178" width="10" height="1" fill="#333"/><rect x="321" y="179" width="8" height="1" fill="#333"/><rect x="322" y="180" width="6" height="1" fill="#333"/><rect x="323" y="181" width="4" height="1" fill="#333"/><rect x="324" y="182" width="2" height="1" fill="#333"/><rect x="339" y="168" width="61" height="24" fill="#7a8a99"/><rect x="340" y="169" width="40" height="22" fill="#b8cfe5"/><rect x="341" y="170" width="38" height="20" fill="#eeeeee"/><rect x="381" y="169" width="18" height="22" fill="url(#gOc22)"/><rect x="381" y="169" width="1" height="22" fill="#e8f0f8"/><rect x="385" y="178" width="10" height="1" fill="#333"/><rect x="386" y="179" width="8" height="1" fill="#333"/><rect x="387" y="180" width="6" height="1" fill="#333"/><rect x="388" y="181" width="4" height="1" fill="#333"/><rect x="389" y="182" width="2" height="1" fill="#333"/><path d="M294.5 186.3 L297.6 175.4" stroke="#2a2a2a" stroke-width="1.15" shape-rendering="auto"/><rect x="282" y="193" width="50" height="24" fill="#7a8a99"/><rect x="283" y="194" width="29" height="22" fill="#b8cfe5"/><rect x="284" y="195" width="27" height="20" fill="#eeeeee"/><rect x="313" y="194" width="18" height="22" fill="url(#gOc22)"/><rect x="313" y="194" width="1" height="22" fill="#e8f0f8"/><rect x="317" y="203" width="10" height="1" fill="#333"/><rect x="318" y="204" width="8" height="1" fill="#333"/><rect x="319" y="205" width="6" height="1" fill="#333"/><rect x="320" y="206" width="4" height="1" fill="#333"/><rect x="321" y="207" width="2" height="1" fill="#333"/><rect x="332" y="193" width="70" height="24" fill="#ffffff"/><rect x="332" y="193" width="69" height="1" fill="#7a8a99"/><rect x="332" y="215" width="69" height="1" fill="#7a8a99"/><rect x="332" y="193" width="1" height="23" fill="#7a8a99"/><rect x="400" y="193" width="1" height="23" fill="#7a8a99"/><rect x="333" y="194" width="69" height="1" fill="#ffffff"/><rect x="333" y="216" width="69" height="1" fill="#ffffff"/><rect x="333" y="194" width="1" height="23" fill="#ffffff"/><rect x="401" y="194" width="1" height="23" fill="#ffffff"/><rect x="332" y="216" width="1" height="1" fill="#eeeeee"/><rect x="333" y="215" width="1" height="1" fill="#eeeeee"/><rect x="401" y="193" width="1" height="1" fill="#eeeeee"/><rect x="400" y="194" width="1" height="1" fill="#eeeeee"/><path d="M294.5 211.3 L297.6 200.4" stroke="#2a2a2a" stroke-width="1.15" shape-rendering="auto"/><rect x="282" y="218" width="50" height="24" fill="#7a8a99"/><rect x="283" y="219" width="29" height="22" fill="#b8cfe5"/><rect x="284" y="220" width="27" height="20" fill="#eeeeee"/><rect x="313" y="219" width="18" height="22" fill="url(#gOc22)"/><rect x="313" y="219" width="1" height="22" fill="#e8f0f8"/><rect x="317" y="228" width="10" height="1" fill="#333"/><rect x="318" y="229" width="8" height="1" fill="#333"/><rect x="319" y="230" width="6" height="1" fill="#333"/><rect x="320" y="231" width="4" height="1" fill="#333"/><rect x="321" y="232" width="2" height="1" fill="#333"/><rect x="332" y="218" width="70" height="24" fill="#ffffff"/><rect x="332" y="218" width="69" height="1" fill="#7a8a99"/><rect x="332" y="240" width="69" height="1" fill="#7a8a99"/><rect x="332" y="218" width="1" height="23" fill="#7a8a99"/><rect x="400" y="218" width="1" height="23" fill="#7a8a99"/><rect x="333" y="219" width="69" height="1" fill="#ffffff"/><rect x="333" y="241" width="69" height="1" fill="#ffffff"/><rect x="333" y="219" width="1" height="23" fill="#ffffff"/><rect x="401" y="219" width="1" height="23" fill="#ffffff"/><rect x="332" y="241" width="1" height="1" fill="#eeeeee"/><rect x="333" y="240" width="1" height="1" fill="#eeeeee"/><rect x="401" y="218" width="1" height="1" fill="#eeeeee"/><rect x="400" y="219" width="1" height="1" fill="#eeeeee"/><path d="M294.5 236.3 L297.6 225.4" stroke="#2a2a2a" stroke-width="1.15" shape-rendering="auto"/><rect x="282" y="243" width="50" height="24" fill="#7a8a99"/><rect x="283" y="244" width="29" height="22" fill="#b8cfe5"/><rect x="284" y="245" width="27" height="20" fill="#eeeeee"/><rect x="313" y="244" width="18" height="22" fill="url(#gOc22)"/><rect x="313" y="244" width="1" height="22" fill="#e8f0f8"/><rect x="317" y="253" width="10" height="1" fill="#333"/><rect x="318" y="254" width="8" height="1" fill="#333"/><rect x="319" y="255" width="6" height="1" fill="#333"/><rect x="320" y="256" width="4" height="1" fill="#333"/><rect x="321" y="257" width="2" height="1" fill="#333"/><rect x="332" y="243" width="70" height="24" fill="#ffffff"/><rect x="332" y="243" width="69" height="1" fill="#7a8a99"/><rect x="332" y="265" width="69" height="1" fill="#7a8a99"/><rect x="332" y="243" width="1" height="23" fill="#7a8a99"/><rect x="400" y="243" width="1" height="23" fill="#7a8a99"/><rect x="333" y="244" width="69" height="1" fill="#ffffff"/><rect x="333" y="266" width="69" height="1" fill="#ffffff"/><rect x="333" y="244" width="1" height="23" fill="#ffffff"/><rect x="401" y="244" width="1" height="23" fill="#ffffff"/><rect x="332" y="266" width="1" height="1" fill="#eeeeee"/><rect x="333" y="265" width="1" height="1" fill="#eeeeee"/><rect x="401" y="243" width="1" height="1" fill="#eeeeee"/><rect x="400" y="244" width="1" height="1" fill="#eeeeee"/><path d="M294.5 261.3 L297.6 250.4" stroke="#2a2a2a" stroke-width="1.15" shape-rendering="auto"/><rect x="282" y="268" width="53" height="24" fill="#7a8a99"/><rect x="283" y="269" width="32" height="22" fill="#b8cfe5"/><rect x="284" y="270" width="30" height="20" fill="#eeeeee"/><rect x="316" y="269" width="18" height="22" fill="url(#gOc22)"/><rect x="316" y="269" width="1" height="22" fill="#e8f0f8"/><rect x="320" y="278" width="10" height="1" fill="#333"/><rect x="321" y="279" width="8" height="1" fill="#333"/><rect x="322" y="280" width="6" height="1" fill="#333"/><rect x="323" y="281" width="4" height="1" fill="#333"/><rect x="324" y="282" width="2" height="1" fill="#333"/><rect x="339" y="268" width="61" height="24" fill="#7a8a99"/><rect x="340" y="269" width="40" height="22" fill="#b8cfe5"/><rect x="341" y="270" width="38" height="20" fill="#eeeeee"/><rect x="381" y="269" width="18" height="22" fill="url(#gOc22)"/><rect x="381" y="269" width="1" height="22" fill="#e8f0f8"/><rect x="385" y="278" width="10" height="1" fill="#333"/><rect x="386" y="279" width="8" height="1" fill="#333"/><rect x="387" y="280" width="6" height="1" fill="#333"/><rect x="388" y="281" width="4" height="1" fill="#333"/><rect x="389" y="282" width="2" height="1" fill="#333"/><path d="M294.5 286.3 L297.6 275.4" stroke="#2a2a2a" stroke-width="1.15" shape-rendering="auto"/><rect x="282" y="293" width="53" height="24" fill="#7a8a99"/><rect x="283" y="294" width="32" height="22" fill="#b8cfe5"/><rect x="284" y="295" width="30" height="20" fill="#eeeeee"/><rect x="316" y="294" width="18" height="22" fill="url(#gOc22)"/><rect x="316" y="294" width="1" height="22" fill="#e8f0f8"/><rect x="320" y="303" width="10" height="1" fill="#333"/><rect x="321" y="304" width="8" height="1" fill="#333"/><rect x="322" y="305" width="6" height="1" fill="#333"/><rect x="323" y="306" width="4" height="1" fill="#333"/><rect x="324" y="307" width="2" height="1" fill="#333"/><rect x="339" y="293" width="61" height="24" fill="#7a8a99"/><rect x="340" y="294" width="40" height="22" fill="#b8cfe5"/><rect x="341" y="295" width="38" height="20" fill="#eeeeee"/><rect x="381" y="294" width="18" height="22" fill="url(#gOc22)"/><rect x="381" y="294" width="1" height="22" fill="#e8f0f8"/><rect x="385" y="303" width="10" height="1" fill="#333"/><rect x="386" y="304" width="8" height="1" fill="#333"/><rect x="387" y="305" width="6" height="1" fill="#333"/><rect x="388" y="306" width="4" height="1" fill="#333"/><rect x="389" y="307" width="2" height="1" fill="#333"/><path d="M294.5 311.3 L297.6 300.4" stroke="#2a2a2a" stroke-width="1.15" shape-rendering="auto"/><rect x="282" y="318" width="50" height="24" fill="#7a8a99"/><rect x="283" y="319" width="29" height="22" fill="#b8cfe5"/><rect x="284" y="320" width="27" height="20" fill="#eeeeee"/><rect x="313" y="319" width="18" height="22" fill="url(#gOc22)"/><rect x="313" y="319" width="1" height="22" fill="#e8f0f8"/><rect x="317" y="328" width="10" height="1" fill="#333"/><rect x="318" y="329" width="8" height="1" fill="#333"/><rect x="319" y="330" width="6" height="1" fill="#333"/><rect x="320" y="331" width="4" height="1" fill="#333"/><rect x="321" y="332" width="2" height="1" fill="#333"/><rect x="332" y="318" width="70" height="24" fill="#ffffff"/><rect x="332" y="318" width="69" height="1" fill="#7a8a99"/><rect x="332" y="340" width="69" height="1" fill="#7a8a99"/><rect x="332" y="318" width="1" height="23" fill="#7a8a99"/><rect x="400" y="318" width="1" height="23" fill="#7a8a99"/><rect x="333" y="319" width="69" height="1" fill="#ffffff"/><rect x="333" y="341" width="69" height="1" fill="#ffffff"/><rect x="333" y="319" width="1" height="23" fill="#ffffff"/><rect x="401" y="319" width="1" height="23" fill="#ffffff"/><rect x="332" y="341" width="1" height="1" fill="#eeeeee"/><rect x="333" y="340" width="1" height="1" fill="#eeeeee"/><rect x="401" y="318" width="1" height="1" fill="#eeeeee"/><rect x="400" y="319" width="1" height="1" fill="#eeeeee"/><path d="M294.5 336.3 L297.6 325.4" stroke="#2a2a2a" stroke-width="1.15" shape-rendering="auto"/><rect x="282" y="343" width="53" height="24" fill="#7a8a99"/><rect x="283" y="344" width="32" height="22" fill="#b8cfe5"/><rect x="284" y="345" width="30" height="20" fill="#eeeeee"/><rect x="316" y="344" width="18" height="22" fill="url(#gOc22)"/><rect x="316" y="344" width="1" height="22" fill="#e8f0f8"/><rect x="320" y="353" width="10" height="1" fill="#333"/><rect x="321" y="354" width="8" height="1" fill="#333"/><rect x="322" y="355" width="6" height="1" fill="#333"/><rect x="323" y="356" width="4" height="1" fill="#333"/><rect x="324" y="357" width="2" height="1" fill="#333"/><rect x="339" y="343" width="61" height="24" fill="#7a8a99"/><rect x="340" y="344" width="40" height="22" fill="#b8cfe5"/><rect x="341" y="345" width="38" height="20" fill="#eeeeee"/><rect x="381" y="344" width="18" height="22" fill="url(#gOc22)"/><rect x="381" y="344" width="1" height="22" fill="#e8f0f8"/><rect x="385" y="353" width="10" height="1" fill="#333"/><rect x="386" y="354" width="8" height="1" fill="#333"/><rect x="387" y="355" width="6" height="1" fill="#333"/><rect x="388" y="356" width="4" height="1" fill="#333"/><rect x="389" y="357" width="2" height="1" fill="#333"/><path d="M294.5 361.3 L297.6 350.4" stroke="#2a2a2a" stroke-width="1.15" shape-rendering="auto"/><rect x="593" y="93" width="53" height="24" fill="#7a8a99"/><rect x="594" y="94" width="32" height="22" fill="#b8cfe5"/><rect x="595" y="95" width="30" height="20" fill="#eeeeee"/><rect x="627" y="94" width="18" height="22" fill="url(#gOc22)"/><rect x="627" y="94" width="1" height="22" fill="#e8f0f8"/><rect x="631" y="103" width="10" height="1" fill="#333"/><rect x="632" y="104" width="8" height="1" fill="#333"/><rect x="633" y="105" width="6" height="1" fill="#333"/><rect x="634" y="106" width="4" height="1" fill="#333"/><rect x="635" y="107" width="2" height="1" fill="#333"/><rect x="650" y="93" width="61" height="24" fill="#7a8a99"/><rect x="651" y="94" width="40" height="22" fill="#b8cfe5"/><rect x="652" y="95" width="38" height="20" fill="#eeeeee"/><rect x="692" y="94" width="18" height="22" fill="url(#gOc22)"/><rect x="692" y="94" width="1" height="22" fill="#e8f0f8"/><rect x="696" y="103" width="10" height="1" fill="#333"/><rect x="697" y="104" width="8" height="1" fill="#333"/><rect x="698" y="105" width="6" height="1" fill="#333"/><rect x="699" y="106" width="4" height="1" fill="#333"/><rect x="700" y="107" width="2" height="1" fill="#333"/><path d="M605.5 111.3 L608.6 100.4" stroke="#2a2a2a" stroke-width="1.15" shape-rendering="auto"/><rect x="593" y="118" width="53" height="24" fill="#7a8a99"/><rect x="594" y="119" width="32" height="22" fill="#b8cfe5"/><rect x="595" y="120" width="30" height="20" fill="#eeeeee"/><rect x="627" y="119" width="18" height="22" fill="url(#gOc22)"/><rect x="627" y="119" width="1" height="22" fill="#e8f0f8"/><rect x="631" y="128" width="10" height="1" fill="#333"/><rect x="632" y="129" width="8" height="1" fill="#333"/><rect x="633" y="130" width="6" height="1" fill="#333"/><rect x="634" y="131" width="4" height="1" fill="#333"/><rect x="635" y="132" width="2" height="1" fill="#333"/><rect x="650" y="118" width="61" height="24" fill="#7a8a99"/><rect x="651" y="119" width="40" height="22" fill="#b8cfe5"/><rect x="652" y="120" width="38" height="20" fill="#eeeeee"/><rect x="692" y="119" width="18" height="22" fill="url(#gOc22)"/><rect x="692" y="119" width="1" height="22" fill="#e8f0f8"/><rect x="696" y="128" width="10" height="1" fill="#333"/><rect x="697" y="129" width="8" height="1" fill="#333"/><rect x="698" y="130" width="6" height="1" fill="#333"/><rect x="699" y="131" width="4" height="1" fill="#333"/><rect x="700" y="132" width="2" height="1" fill="#333"/><path d="M605.5 136.3 L608.6 125.4" stroke="#2a2a2a" stroke-width="1.15" shape-rendering="auto"/><rect x="593" y="143" width="53" height="24" fill="#7a8a99"/><rect x="594" y="144" width="32" height="22" fill="#b8cfe5"/><rect x="595" y="145" width="30" height="20" fill="#eeeeee"/><rect x="627" y="144" width="18" height="22" fill="url(#gOc22)"/><rect x="627" y="144" width="1" height="22" fill="#e8f0f8"/><rect x="631" y="153" width="10" height="1" fill="#333"/><rect x="632" y="154" width="8" height="1" fill="#333"/><rect x="633" y="155" width="6" height="1" fill="#333"/><rect x="634" y="156" width="4" height="1" fill="#333"/><rect x="635" y="157" width="2" height="1" fill="#333"/><rect x="650" y="143" width="61" height="24" fill="#7a8a99"/><rect x="651" y="144" width="40" height="22" fill="#b8cfe5"/><rect x="652" y="145" width="38" height="20" fill="#eeeeee"/><rect x="692" y="144" width="18" height="22" fill="url(#gOc22)"/><rect x="692" y="144" width="1" height="22" fill="#e8f0f8"/><rect x="696" y="153" width="10" height="1" fill="#333"/><rect x="697" y="154" width="8" height="1" fill="#333"/><rect x="698" y="155" width="6" height="1" fill="#333"/><rect x="699" y="156" width="4" height="1" fill="#333"/><rect x="700" y="157" width="2" height="1" fill="#333"/><path d="M605.5 161.3 L608.6 150.4" stroke="#2a2a2a" stroke-width="1.15" shape-rendering="auto"/><rect x="593" y="168" width="50" height="24" fill="#7a8a99"/><rect x="594" y="169" width="29" height="22" fill="#b8cfe5"/><rect x="595" y="170" width="27" height="20" fill="#eeeeee"/><rect x="624" y="169" width="18" height="22" fill="url(#gOc22)"/><rect x="624" y="169" width="1" height="22" fill="#e8f0f8"/><rect x="628" y="178" width="10" height="1" fill="#333"/><rect x="629" y="179" width="8" height="1" fill="#333"/><rect x="630" y="180" width="6" height="1" fill="#333"/><rect x="631" y="181" width="4" height="1" fill="#333"/><rect x="632" y="182" width="2" height="1" fill="#333"/><rect x="643" y="168" width="70" height="24" fill="#ffffff"/><rect x="643" y="168" width="69" height="1" fill="#7a8a99"/><rect x="643" y="190" width="69" height="1" fill="#7a8a99"/><rect x="643" y="168" width="1" height="23" fill="#7a8a99"/><rect x="711" y="168" width="1" height="23" fill="#7a8a99"/><rect x="644" y="169" width="69" height="1" fill="#ffffff"/><rect x="644" y="191" width="69" height="1" fill="#ffffff"/><rect x="644" y="169" width="1" height="23" fill="#ffffff"/><rect x="712" y="169" width="1" height="23" fill="#ffffff"/><rect x="643" y="191" width="1" height="1" fill="#eeeeee"/><rect x="644" y="190" width="1" height="1" fill="#eeeeee"/><rect x="712" y="168" width="1" height="1" fill="#eeeeee"/><rect x="711" y="169" width="1" height="1" fill="#eeeeee"/><path d="M605.5 186.3 L608.6 175.4" stroke="#2a2a2a" stroke-width="1.15" shape-rendering="auto"/><rect x="593" y="193" width="50" height="24" fill="#7a8a99"/><rect x="594" y="194" width="29" height="22" fill="#b8cfe5"/><rect x="595" y="195" width="27" height="20" fill="#eeeeee"/><rect x="624" y="194" width="18" height="22" fill="url(#gOc22)"/><rect x="624" y="194" width="1" height="22" fill="#e8f0f8"/><rect x="628" y="203" width="10" height="1" fill="#333"/><rect x="629" y="204" width="8" height="1" fill="#333"/><rect x="630" y="205" width="6" height="1" fill="#333"/><rect x="631" y="206" width="4" height="1" fill="#333"/><rect x="632" y="207" width="2" height="1" fill="#333"/><rect x="643" y="193" width="70" height="24" fill="#ffffff"/><rect x="643" y="193" width="69" height="1" fill="#7a8a99"/><rect x="643" y="215" width="69" height="1" fill="#7a8a99"/><rect x="643" y="193" width="1" height="23" fill="#7a8a99"/><rect x="711" y="193" width="1" height="23" fill="#7a8a99"/><rect x="644" y="194" width="69" height="1" fill="#ffffff"/><rect x="644" y="216" width="69" height="1" fill="#ffffff"/><rect x="644" y="194" width="1" height="23" fill="#ffffff"/><rect x="712" y="194" width="1" height="23" fill="#ffffff"/><rect x="643" y="216" width="1" height="1" fill="#eeeeee"/><rect x="644" y="215" width="1" height="1" fill="#eeeeee"/><rect x="712" y="193" width="1" height="1" fill="#eeeeee"/><rect x="711" y="194" width="1" height="1" fill="#eeeeee"/><path d="M605.5 211.3 L608.6 200.4" stroke="#2a2a2a" stroke-width="1.15" shape-rendering="auto"/><rect x="593" y="218" width="53" height="24" fill="#7a8a99"/><rect x="594" y="219" width="32" height="22" fill="#b8cfe5"/><rect x="595" y="220" width="30" height="20" fill="#eeeeee"/><rect x="627" y="219" width="18" height="22" fill="url(#gOc22)"/><rect x="627" y="219" width="1" height="22" fill="#e8f0f8"/><rect x="631" y="228" width="10" height="1" fill="#333"/><rect x="632" y="229" width="8" height="1" fill="#333"/><rect x="633" y="230" width="6" height="1" fill="#333"/><rect x="634" y="231" width="4" height="1" fill="#333"/><rect x="635" y="232" width="2" height="1" fill="#333"/><rect x="650" y="218" width="61" height="24" fill="#7a8a99"/><rect x="651" y="219" width="40" height="22" fill="#b8cfe5"/><rect x="652" y="220" width="38" height="20" fill="#eeeeee"/><rect x="692" y="219" width="18" height="22" fill="url(#gOc22)"/><rect x="692" y="219" width="1" height="22" fill="#e8f0f8"/><rect x="696" y="228" width="10" height="1" fill="#333"/><rect x="697" y="229" width="8" height="1" fill="#333"/><rect x="698" y="230" width="6" height="1" fill="#333"/><rect x="699" y="231" width="4" height="1" fill="#333"/><rect x="700" y="232" width="2" height="1" fill="#333"/><path d="M605.5 236.3 L608.6 225.4" stroke="#2a2a2a" stroke-width="1.15" shape-rendering="auto"/><rect x="593" y="243" width="50" height="24" fill="#7a8a99"/><rect x="594" y="244" width="29" height="22" fill="#b8cfe5"/><rect x="595" y="245" width="27" height="20" fill="#eeeeee"/><rect x="624" y="244" width="18" height="22" fill="url(#gOc22)"/><rect x="624" y="244" width="1" height="22" fill="#e8f0f8"/><rect x="628" y="253" width="10" height="1" fill="#333"/><rect x="629" y="254" width="8" height="1" fill="#333"/><rect x="630" y="255" width="6" height="1" fill="#333"/><rect x="631" y="256" width="4" height="1" fill="#333"/><rect x="632" y="257" width="2" height="1" fill="#333"/><rect x="643" y="243" width="70" height="24" fill="#ffffff"/><rect x="643" y="243" width="69" height="1" fill="#7a8a99"/><rect x="643" y="265" width="69" height="1" fill="#7a8a99"/><rect x="643" y="243" width="1" height="23" fill="#7a8a99"/><rect x="711" y="243" width="1" height="23" fill="#7a8a99"/><rect x="644" y="244" width="69" height="1" fill="#ffffff"/><rect x="644" y="266" width="69" height="1" fill="#ffffff"/><rect x="644" y="244" width="1" height="23" fill="#ffffff"/><rect x="712" y="244" width="1" height="23" fill="#ffffff"/><rect x="643" y="266" width="1" height="1" fill="#eeeeee"/><rect x="644" y="265" width="1" height="1" fill="#eeeeee"/><rect x="712" y="243" width="1" height="1" fill="#eeeeee"/><rect x="711" y="244" width="1" height="1" fill="#eeeeee"/><path d="M605.5 261.3 L608.6 250.4" stroke="#2a2a2a" stroke-width="1.15" shape-rendering="auto"/><rect x="593" y="268" width="50" height="24" fill="#7a8a99"/><rect x="594" y="269" width="29" height="22" fill="#b8cfe5"/><rect x="595" y="270" width="27" height="20" fill="#eeeeee"/><rect x="624" y="269" width="18" height="22" fill="url(#gOc22)"/><rect x="624" y="269" width="1" height="22" fill="#e8f0f8"/><rect x="628" y="278" width="10" height="1" fill="#333"/><rect x="629" y="279" width="8" height="1" fill="#333"/><rect x="630" y="280" width="6" height="1" fill="#333"/><rect x="631" y="281" width="4" height="1" fill="#333"/><rect x="632" y="282" width="2" height="1" fill="#333"/><rect x="643" y="268" width="70" height="24" fill="#ffffff"/><rect x="643" y="268" width="69" height="1" fill="#7a8a99"/><rect x="643" y="290" width="69" height="1" fill="#7a8a99"/><rect x="643" y="268" width="1" height="23" fill="#7a8a99"/><rect x="711" y="268" width="1" height="23" fill="#7a8a99"/><rect x="644" y="269" width="69" height="1" fill="#ffffff"/><rect x="644" y="291" width="69" height="1" fill="#ffffff"/><rect x="644" y="269" width="1" height="23" fill="#ffffff"/><rect x="712" y="269" width="1" height="23" fill="#ffffff"/><rect x="643" y="291" width="1" height="1" fill="#eeeeee"/><rect x="644" y="290" width="1" height="1" fill="#eeeeee"/><rect x="712" y="268" width="1" height="1" fill="#eeeeee"/><rect x="711" y="269" width="1" height="1" fill="#eeeeee"/><path d="M605.5 286.3 L608.6 275.4" stroke="#2a2a2a" stroke-width="1.15" shape-rendering="auto"/><rect x="593" y="293" width="50" height="24" fill="#7a8a99"/><rect x="594" y="294" width="29" height="22" fill="#b8cfe5"/><rect x="595" y="295" width="27" height="20" fill="#eeeeee"/><rect x="624" y="294" width="18" height="22" fill="url(#gOc22)"/><rect x="624" y="294" width="1" height="22" fill="#e8f0f8"/><rect x="628" y="303" width="10" height="1" fill="#333"/><rect x="629" y="304" width="8" height="1" fill="#333"/><rect x="630" y="305" width="6" height="1" fill="#333"/><rect x="631" y="306" width="4" height="1" fill="#333"/><rect x="632" y="307" width="2" height="1" fill="#333"/><rect x="643" y="293" width="70" height="24" fill="#ffffff"/><rect x="643" y="293" width="69" height="1" fill="#7a8a99"/><rect x="643" y="315" width="69" height="1" fill="#7a8a99"/><rect x="643" y="293" width="1" height="23" fill="#7a8a99"/><rect x="711" y="293" width="1" height="23" fill="#7a8a99"/><rect x="644" y="294" width="69" height="1" fill="#ffffff"/><rect x="644" y="316" width="69" height="1" fill="#ffffff"/><rect x="644" y="294" width="1" height="23" fill="#ffffff"/><rect x="712" y="294" width="1" height="23" fill="#ffffff"/><rect x="643" y="316" width="1" height="1" fill="#eeeeee"/><rect x="644" y="315" width="1" height="1" fill="#eeeeee"/><rect x="712" y="293" width="1" height="1" fill="#eeeeee"/><rect x="711" y="294" width="1" height="1" fill="#eeeeee"/><path d="M605.5 311.3 L608.6 300.4" stroke="#2a2a2a" stroke-width="1.15" shape-rendering="auto"/><rect x="593" y="318" width="53" height="24" fill="#7a8a99"/><rect x="594" y="319" width="32" height="22" fill="#b8cfe5"/><rect x="595" y="320" width="30" height="20" fill="#eeeeee"/><rect x="627" y="319" width="18" height="22" fill="url(#gOc22)"/><rect x="627" y="319" width="1" height="22" fill="#e8f0f8"/><rect x="631" y="328" width="10" height="1" fill="#333"/><rect x="632" y="329" width="8" height="1" fill="#333"/><rect x="633" y="330" width="6" height="1" fill="#333"/><rect x="634" y="331" width="4" height="1" fill="#333"/><rect x="635" y="332" width="2" height="1" fill="#333"/><rect x="650" y="318" width="61" height="24" fill="#7a8a99"/><rect x="651" y="319" width="40" height="22" fill="#b8cfe5"/><rect x="652" y="320" width="38" height="20" fill="#eeeeee"/><rect x="692" y="319" width="18" height="22" fill="url(#gOc22)"/><rect x="692" y="319" width="1" height="22" fill="#e8f0f8"/><rect x="696" y="328" width="10" height="1" fill="#333"/><rect x="697" y="329" width="8" height="1" fill="#333"/><rect x="698" y="330" width="6" height="1" fill="#333"/><rect x="699" y="331" width="4" height="1" fill="#333"/><rect x="700" y="332" width="2" height="1" fill="#333"/><path d="M605.5 336.3 L608.6 325.4" stroke="#2a2a2a" stroke-width="1.15" shape-rendering="auto"/><rect x="593" y="343" width="53" height="24" fill="#7a8a99"/><rect x="594" y="344" width="32" height="22" fill="#b8cfe5"/><rect x="595" y="345" width="30" height="20" fill="#eeeeee"/><rect x="627" y="344" width="18" height="22" fill="url(#gOc22)"/><rect x="627" y="344" width="1" height="22" fill="#e8f0f8"/><rect x="631" y="353" width="10" height="1" fill="#333"/><rect x="632" y="354" width="8" height="1" fill="#333"/><rect x="633" y="355" width="6" height="1" fill="#333"/><rect x="634" y="356" width="4" height="1" fill="#333"/><rect x="635" y="357" width="2" height="1" fill="#333"/><rect x="650" y="343" width="61" height="24" fill="#7a8a99"/><rect x="651" y="344" width="40" height="22" fill="#b8cfe5"/><rect x="652" y="345" width="38" height="20" fill="#eeeeee"/><rect x="692" y="344" width="18" height="22" fill="url(#gOc22)"/><rect x="692" y="344" width="1" height="22" fill="#e8f0f8"/><rect x="696" y="353" width="10" height="1" fill="#333"/><rect x="697" y="354" width="8" height="1" fill="#333"/><rect x="698" y="355" width="6" height="1" fill="#333"/><rect x="699" y="356" width="4" height="1" fill="#333"/><rect x="700" y="357" width="2" height="1" fill="#333"/><path d="M605.5 361.3 L608.6 350.4" stroke="#2a2a2a" stroke-width="1.15" shape-rendering="auto"/></g><rect x="746" y="114" width="1" height="242" fill="#7a8a99"/><rect x="747" y="114" width="1" height="242" fill="#b8cfe5"/><rect x="747" y="114" width="14" height="15" fill="#eeeeee"/><rect x="747" y="114" width="14" height="1" fill="#ffffff"/><rect x="747" y="114" width="1" height="15" fill="#ffffff"/><rect x="747" y="129" width="14" height="1" fill="#7a8a99"/><rect x="748" y="130" width="13" height="1" fill="#ffffff"/><rect x="753" y="119" width="2" height="1" fill="#333"/><rect x="752" y="120" width="4" height="1" fill="#333"/><rect x="751" y="121" width="6" height="1" fill="#333"/><rect x="750" y="122" width="8" height="1" fill="#333"/><rect x="747" y="340" width="14" height="1" fill="#7a8a99"/><rect x="747" y="341" width="14" height="14" fill="#eeeeee"/><rect x="747" y="341" width="14" height="1" fill="#ffffff"/><rect x="747" y="341" width="1" height="15" fill="#ffffff"/><rect x="747" y="355" width="14" height="1" fill="#7a8a99"/><rect x="750" y="347" width="8" height="1" fill="#333"/><rect x="751" y="348" width="6" height="1" fill="#333"/><rect x="752" y="349" width="4" height="1" fill="#333"/><rect x="753" y="350" width="2" height="1" fill="#333"/><rect x="746" y="210" width="15" height="52" fill="#6382bf"/><rect x="747" y="211" width="14" height="50" fill="url(#gOcH)"/><rect x="750" y="234" width="10" height="1" fill="#6382bf"/><rect x="751" y="235" width="10" height="1" fill="#ffffff"/><rect x="750" y="236" width="10" height="1" fill="#6382bf"/><rect x="751" y="237" width="10" height="1" fill="#ffffff"/><rect x="750" y="238" width="10" height="1" fill="#6382bf"/><rect x="751" y="239" width="10" height="1" fill="#ffffff"/><rect x="9" y="369" width="461" height="1" fill="#b8cfe5"/><rect x="9" y="429" width="461" height="1" fill="#b8cfe5"/><rect x="9" y="369" width="1" height="61" fill="#b8cfe5"/><rect x="469" y="369" width="1" height="61" fill="#b8cfe5"/><rect x="13" y="369" width="118" height="1" fill="#eeeeee"/><rect x="588" y="369" width="175" height="1" fill="#b8cfe5"/><rect x="588" y="429" width="175" height="1" fill="#b8cfe5"/><rect x="588" y="369" width="1" height="61" fill="#b8cfe5"/><rect x="762" y="369" width="1" height="61" fill="#b8cfe5"/><rect x="592" y="369" width="98" height="1" fill="#eeeeee"/><circle cx="125" cy="392" r="5.5" fill="url(#gRad)" stroke="#7a8a99" stroke-width="1"/><circle cx="125" cy="392" r="3" fill="#333"/><circle cx="125" cy="415" r="5.5" fill="url(#gRad)" stroke="#7a8a99" stroke-width="1"/><rect x="211" y="397" width="13" height="13" fill="#7a8a99"/><rect x="212" y="398" width="11" height="11" fill="#ffffff"/><rect x="213" y="399" width="10" height="10" fill="url(#gOc11)"/><path d="M215 402 L215 406.5 L221 400.5" fill="none" stroke="#333" stroke-width="2"/><rect x="492" y="384" width="74" height="25" fill="#7a8a99"/><rect x="493" y="385" width="72" height="23" fill="url(#gOc23)"/><rect x="596" y="390" width="159" height="24" fill="#7a8a99"/><rect x="597" y="391" width="138" height="22" fill="#b8cfe5"/><rect x="598" y="392" width="136" height="20" fill="#eeeeee"/><rect x="736" y="391" width="18" height="22" fill="url(#gOc22)"/><rect x="736" y="391" width="1" height="22" fill="#e8f0f8"/><rect x="740" y="400" width="10" height="1" fill="#333"/><rect x="741" y="401" width="8" height="1" fill="#333"/><rect x="742" y="402" width="6" height="1" fill="#333"/><rect x="743" y="403" width="4" height="1" fill="#333"/><rect x="744" y="404" width="2" height="1" fill="#333"/><rect x="600" y="403" width="5" height="1" fill="#2a2a2a"/><rect x="608" y="403" width="5" height="1" fill="#2a2a2a"/><rect x="715" y="403" width="5" height="1" fill="#2a2a2a"/><rect x="723" y="403" width="5" height="1" fill="#2a2a2a"/></svg>
<svg width="0" height="0" style="position:absolute"><filter id="thr"><feComponentTransfer><feFuncA type="linear" slope="2.5" intercept="-0.7"/></feComponentTransfer></filter></svg>
<div id="vp" style="filter:url(#thr)"><div class="t" style="left:275.00px;top:-18px;font-size:13px;font-weight:bold;color:#2a2a2a;">n</div><div class="t" style="left:291.00px;top:-18px;font-size:13px;font-weight:bold;color:#2a2a2a;transform:scaleX(0.7500);">a</div><div class="t" style="left:332.00px;top:7px;font-size:13px;font-weight:bold;color:#2a2a2a;">false</div><div class="t" style="left:275.00px;top:7px;font-size:13px;font-weight:bold;color:#2a2a2a;">n</div><div class="t" style="left:291.00px;top:7px;font-size:13px;font-weight:bold;color:#2a2a2a;transform:scaleX(0.7500);">a</div><div class="t" style="left:202.00px;top:7px;font-size:13px;font-weight:bold;color:#2a2a2a;transform:scaleX(1.0156);">j2me<span class=u>_</span>bmp</div><div class="t" style="left:332.00px;top:32px;font-size:13px;font-weight:bold;color:#2a2a2a;">false</div><div class="t" style="left:275.00px;top:32px;font-size:13px;font-weight:bold;color:#2a2a2a;">n</div><div class="t" style="left:291.00px;top:32px;font-size:13px;font-weight:bold;color:#2a2a2a;transform:scaleX(0.7500);">a</div><div class="t" style="left:194.00px;top:32px;font-size:13px;font-weight:bold;color:#2a2a2a;transform:scaleX(1.0282);">j2me<span class=u>_</span>bmp3</div><div class="t" style="left:332.00px;top:57px;font-size:13px;font-weight:bold;color:#2a2a2a;">false</div><div class="t" style="left:275.00px;top:57px;font-size:13px;font-weight:bold;color:#2a2a2a;">n</div><div class="t" style="left:291.00px;top:57px;font-size:13px;font-weight:bold;color:#2a2a2a;transform:scaleX(0.7500);">a</div><div class="t" style="left:198.00px;top:57px;font-size:13px;font-weight:bold;color:#2a2a2a;transform:scaleX(1.0299);">j2me<span class=u>_</span>btapi</div><div class="t" style="left:275.00px;top:82px;font-size:13px;font-weight:bold;color:#2a2a2a;">n</div><div class="t" style="left:291.00px;top:82px;font-size:13px;font-weight:bold;color:#2a2a2a;transform:scaleX(0.7500);">a</div><div class="t" style="left:142.00px;top:82px;font-size:13px;font-weight:bold;color:#2a2a2a;transform:scaleX(0.9843);">j2me<span class=u>_</span>canvas<span class=u>_</span>height</div><div class="t" style="left:275.00px;top:107px;font-size:13px;font-weight:bold;color:#2a2a2a;">n</div><div class="t" style="left:291.00px;top:107px;font-size:13px;font-weight:bold;color:#2a2a2a;transform:scaleX(0.7500);">a</div><div class="t" style="left:146.00px;top:107px;font-size:13px;font-weight:bold;color:#2a2a2a;transform:scaleX(0.9918);">j2me<span class=u>_</span>canvas<span class=u>_</span>width</div><div class="t" style="left:275.00px;top:132px;font-size:13px;font-weight:bold;color:#2a2a2a;">n</div><div class="t" style="left:291.00px;top:132px;font-size:13px;font-weight:bold;color:#2a2a2a;transform:scaleX(0.7500);">a</div><div class="t" style="left:85.00px;top:132px;font-size:13px;font-weight:bold;color:#2a2a2a;transform:scaleX(0.9945);">j2me<span class=u>_</span>capture<span class=u>_</span>image<span class=u>_</span>formats</div><div class="t" style="left:332.00px;top:157px;font-size:13px;font-weight:bold;color:#2a2a2a;">false</div><div class="t" style="left:275.00px;top:157px;font-size:13px;font-weight:bold;color:#2a2a2a;">n</div><div class="t" style="left:291.00px;top:157px;font-size:13px;font-weight:bold;color:#2a2a2a;transform:scaleX(0.7500);">a</div><div class="t" style="left:178.00px;top:157px;font-size:13px;font-weight:bold;color:#2a2a2a;transform:scaleX(0.9780);">j2me<span class=u>_</span>cldc<span class=u>_</span>1<span class=u>_</span>0</div><div class="t" style="left:332.00px;top:182px;font-size:13px;font-weight:bold;color:#2a2a2a;">false</div><div class="t" style="left:275.00px;top:182px;font-size:13px;font-weight:bold;color:#2a2a2a;">n</div><div class="t" style="left:291.00px;top:182px;font-size:13px;font-weight:bold;color:#2a2a2a;transform:scaleX(0.7500);">a</div><div class="t" style="left:178.00px;top:182px;font-size:13px;font-weight:bold;color:#2a2a2a;transform:scaleX(0.9674);">j2me<span class=u>_</span>cldc<span class=u>_</span>1<span class=u>_</span>1</div><div class="t" style="left:275.00px;top:207px;font-size:13px;font-weight:bold;color:#2a2a2a;">n</div><div class="t" style="left:291.00px;top:207px;font-size:13px;font-weight:bold;color:#2a2a2a;transform:scaleX(0.7500);">a</div><div class="t" style="left:138.00px;top:207px;font-size:13px;font-weight:bold;color:#2a2a2a;transform:scaleX(0.9699);">j2me<span class=u>_</span>clear<span class=u>_</span>key<span class=u>_</span>code</div><div class="t" style="left:332.00px;top:232px;font-size:13px;font-weight:bold;color:#2a2a2a;">false</div><div class="t" style="left:275.00px;top:232px;font-size:13px;font-weight:bold;color:#2a2a2a;">n</div><div class="t" style="left:291.00px;top:232px;font-size:13px;font-weight:bold;color:#2a2a2a;transform:scaleX(0.7500);">a</div><div class="t" style="left:125.00px;top:232px;font-size:13px;font-weight:bold;color:#2a2a2a;transform:scaleX(1.0143);">j2me<span class=u>_</span>datefield<span class=u>_</span>broken</div><div class="t" style="left:643.00px;top:-18px;font-size:13px;font-weight:bold;color:#2a2a2a;">false</div><div class="t" style="left:586.00px;top:-18px;font-size:13px;font-weight:bold;color:#2a2a2a;">n</div><div class="t" style="left:602.00px;top:-18px;font-size:13px;font-weight:bold;color:#2a2a2a;transform:scaleX(0.7500);">a</div><div class="t" style="left:643.00px;top:7px;font-size:13px;font-weight:bold;color:#2a2a2a;">false</div><div class="t" style="left:586.00px;top:7px;font-size:13px;font-weight:bold;color:#2a2a2a;">n</div><div class="t" style="left:602.00px;top:7px;font-size:13px;font-weight:bold;color:#2a2a2a;transform:scaleX(0.7500);">a</div><div class="t" style="left:480.00px;top:7px;font-size:13px;font-weight:bold;color:#2a2a2a;">j2me<span class=u>_</span>realmedia</div><div class="t" style="left:643.00px;top:32px;font-size:13px;font-weight:bold;color:#2a2a2a;">false</div><div class="t" style="left:586.00px;top:32px;font-size:13px;font-weight:bold;color:#2a2a2a;">n</div><div class="t" style="left:602.00px;top:32px;font-size:13px;font-weight:bold;color:#2a2a2a;transform:scaleX(0.7500);">a</div><div class="t" style="left:484.00px;top:32px;font-size:13px;font-weight:bold;color:#2a2a2a;">j2me<span class=u>_</span>realvideo</div><div class="t" style="left:586.00px;top:57px;font-size:13px;font-weight:bold;color:#2a2a2a;">n</div><div class="t" style="left:602.00px;top:57px;font-size:13px;font-weight:bold;color:#2a2a2a;transform:scaleX(0.7500);">a</div><div class="t" style="left:440.00px;top:57px;font-size:13px;font-weight:bold;color:#2a2a2a;transform:scaleX(0.9787);">j2me<span class=u>_</span>return<span class=u>_</span>key<span class=u>_</span>code</div><div class="t" style="left:586.00px;top:82px;font-size:13px;font-weight:bold;color:#2a2a2a;">n</div><div class="t" style="left:602.00px;top:82px;font-size:13px;font-weight:bold;color:#2a2a2a;transform:scaleX(0.7500);">a</div><div class="t" style="left:423.00px;top:82px;font-size:13px;font-weight:bold;color:#2a2a2a;transform:scaleX(0.9936);">j2me<span class=u>_</span>right<span class=u>_</span>softkey<span class=u>_</span>code</div><div class="t" style="left:643.00px;top:107px;font-size:13px;font-weight:bold;color:#2a2a2a;">false</div><div class="t" style="left:586.00px;top:107px;font-size:13px;font-weight:bold;color:#2a2a2a;">n</div><div class="t" style="left:602.00px;top:107px;font-size:13px;font-weight:bold;color:#2a2a2a;transform:scaleX(0.7500);">a</div><div class="t" style="left:519.00px;top:107px;font-size:13px;font-weight:bold;color:#2a2a2a;transform:scaleX(1.0172);">j2me<span class=u>_</span>rmf</div><div class="t" style="left:586.00px;top:132px;font-size:13px;font-weight:bold;color:#2a2a2a;">n</div><div class="t" style="left:602.00px;top:132px;font-size:13px;font-weight:bold;color:#2a2a2a;transform:scaleX(0.7500);">a</div><div class="t" style="left:455.00px;top:132px;font-size:13px;font-weight:bold;color:#2a2a2a;transform:scaleX(0.9840);">j2me<span class=u>_</span>screen<span class=u>_</span>height</div><div class="t" style="left:586.00px;top:157px;font-size:13px;font-weight:bold;color:#2a2a2a;">n</div><div class="t" style="left:602.00px;top:157px;font-size:13px;font-weight:bold;color:#2a2a2a;transform:scaleX(0.7500);">a</div><div class="t" style="left:459.00px;top:157px;font-size:13px;font-weight:bold;color:#2a2a2a;">j2me<span class=u>_</span>screen<span class=u>_</span>width</div><div class="t" style="left:586.00px;top:182px;font-size:13px;font-weight:bold;color:#2a2a2a;">n</div><div class="t" style="left:602.00px;top:182px;font-size:13px;font-weight:bold;color:#2a2a2a;transform:scaleX(0.7500);">a</div><div class="t" style="left:442.00px;top:182px;font-size:13px;font-weight:bold;color:#2a2a2a;transform:scaleX(0.9714);">j2me<span class=u>_</span>select<span class=u>_</span>key<span class=u>_</span>code</div><div class="t" style="left:643.00px;top:207px;font-size:13px;font-weight:bold;color:#2a2a2a;">false</div><div class="t" style="left:586.00px;top:207px;font-size:13px;font-weight:bold;color:#2a2a2a;">n</div><div class="t" style="left:602.00px;top:207px;font-size:13px;font-weight:bold;color:#2a2a2a;transform:scaleX(0.7500);">a</div><div class="t" style="left:507.00px;top:207px;font-size:13px;font-weight:bold;color:#2a2a2a;transform:scaleX(1.0143);">j2me<span class=u>_</span>serial</div><div class="t" style="left:643.00px;top:232px;font-size:13px;font-weight:bold;color:#2a2a2a;">false</div><div class="t" style="left:586.00px;top:232px;font-size:13px;font-weight:bold;color:#2a2a2a;">n</div><div class="t" style="left:602.00px;top:232px;font-size:13px;font-weight:bold;color:#2a2a2a;transform:scaleX(0.7500);">a</div><div class="t" style="left:413.00px;top:232px;font-size:13px;font-weight:bold;color:#2a2a2a;transform:scaleX(0.9763);">j2me<span class=u>_</span>siemens<span class=u>_</span>color<span class=u>_</span>game</div></div>
<div style="position:absolute;left:0;top:0;width:774px;height:442px;filter:url(#thr)"><div class="t" style="left:37.89px;top:2px;font-size:12px;font-weight:bold;color:#fff;transform:scaleX(1.1086);text-shadow:1px 1px 0 #111;">Mobile Device Information v1.0</div><div class="t" style="left:11.00px;top:26px;font-size:13px;font-weight:bold;color:#2a2a2a;">File</div><div class="t" style="left:46.00px;top:26px;font-size:13px;font-weight:bold;color:#2a2a2a;transform:scaleX(1.0606);">Tools</div><div class="t" style="left:93.00px;top:26px;font-size:13px;font-weight:bold;color:#2a2a2a;">Help</div><div class="t" style="left:18.02px;top:49px;font-size:13px;font-weight:bold;color:#2a2a2a;transform:scaleX(0.9756);">Device</div><div class="t" style="left:78.00px;top:49px;font-size:13px;font-weight:bold;color:#2a2a2a;transform:scaleX(0.9535);">Search</div><div class="t" style="left:140.02px;top:49px;font-size:13px;font-weight:bold;color:#2a2a2a;transform:scaleX(0.9783);">Results</div><div class="t" style="left:207.00px;top:49px;font-size:13px;font-weight:bold;color:#2a2a2a;">User Agents*</div><div class="t" style="left:311.00px;top:49px;font-size:13px;font-weight:bold;color:#2a2a2a;">Relationships*</div><div class="t" style="left:423.00px;top:49px;font-size:13px;font-weight:bold;color:#2a2a2a;">Comparison</div><div class="t" style="left:19.99px;top:73px;font-size:13px;font-weight:bold;color:#2a2a2a;transform:scaleX(1.0128);">product<span class=u>_</span>info</div><div class="t" style="left:121.00px;top:73px;font-size:13px;font-weight:bold;color:#2a2a2a;transform:scaleX(0.9600);">security</div><div class="t" style="left:190.00px;top:73px;font-size:13px;font-weight:bold;color:#2a2a2a;transform:scaleX(0.9615);">sms</div><div class="t" style="left:238.00px;top:73px;font-size:13px;font-weight:bold;color:#2a2a2a;">sound<span class=u>_</span>format</div><div class="t" style="left:346.00px;top:73px;font-size:13px;font-weight:bold;color:#2a2a2a;transform:scaleX(0.9787);">storage</div><div class="t" style="left:414.00px;top:73px;font-size:13px;font-weight:bold;color:#2a2a2a;">streaming</div><div class="t" style="left:497.00px;top:73px;font-size:13px;font-weight:bold;color:#2a2a2a;">wap<span class=u>_</span>push</div><div class="t" style="left:582.00px;top:73px;font-size:13px;font-weight:bold;color:#2a2a2a;transform:scaleX(1.0233);">wml<span class=u>_</span>ui</div><div class="t" style="left:647.00px;top:73px;font-size:13px;font-weight:bold;color:#2a2a2a;transform:scaleX(1.0909);">wta</div><div class="t" style="left:690.00px;top:73px;font-size:13px;font-weight:bold;color:#2a2a2a;transform:scaleX(1.0189);">xhtml<span class=u>_</span>ui</div><div class="t" style="left:22.00px;top:91px;font-size:13px;font-weight:bold;color:#2a2a2a;">bugs</div><div class="t" style="left:77.00px;top:91px;font-size:13px;font-weight:bold;color:#2a2a2a;transform:scaleX(0.9189);">cache</div><div class="t" style="left:137.00px;top:91px;font-size:13px;font-weight:bold;color:#2a2a2a;">chtml<span class=u>_</span>ui</div><div class="t" style="left:217.00px;top:91px;font-size:13px;font-weight:bold;color:#2a2a2a;transform:scaleX(0.9778);">display</div><div class="t" style="left:287.00px;top:91px;font-size:13px;font-weight:bold;color:#2a2a2a;">drm</div><div class="t" style="left:335.98px;top:91px;font-size:13px;font-weight:bold;color:#2a2a2a;transform:scaleX(1.0238);">image<span class=u>_</span>format</div><div class="t" style="left:451.00px;top:91px;font-size:13px;font-weight:bold;color:#2a2a2a;transform:scaleX(1.0690);">j2me</div><div class="t" style="left:506.98px;top:91px;font-size:13px;font-weight:bold;color:#2a2a2a;transform:scaleX(1.0217);">markup</div><div class="t" style="left:580.97px;top:91px;font-size:13px;font-weight:bold;color:#2a2a2a;transform:scaleX(1.0345);">mms</div><div class="t" style="left:640.00px;top:91px;font-size:13px;font-weight:bold;color:#2a2a2a;transform:scaleX(0.9906);">object<span class=u>_</span>download</div><div class="t" style="left:15.00px;top:360px;font-size:13px;font-weight:bold;color:#2a2a2a;transform:scaleX(0.9744);">Search parameters</div><div class="t" style="left:594.00px;top:360px;font-size:13px;font-weight:bold;color:#2a2a2a;transform:scaleX(0.9592);">Saved searches</div><div class="t" style="left:136.02px;top:383px;font-size:13px;font-weight:bold;color:#2a2a2a;transform:scaleX(0.9846);">Match ALL</div><div class="t" style="left:136.01px;top:406px;font-size:13px;font-weight:bold;color:#2a2a2a;transform:scaleX(0.9851);">Match ANY</div><div class="t" style="left:227.98px;top:394px;font-size:13px;font-weight:bold;color:#2a2a2a;transform:scaleX(1.0155);">Ignore default values</div><div class="t" style="left:509.00px;top:387px;font-size:13px;font-weight:bold;color:#2a2a2a;transform:scaleX(0.9070);">Search</div><div class="t" style="left:619.00px;top:393px;font-size:13px;font-weight:bold;color:#2a2a2a;transform:scaleX(0.9574);">Select a search</div></div>
<svg width="774" height="442" shape-rendering="crispEdges"><rect x="282" y="242" width="50" height="104" fill="#000"/><rect x="283" y="243" width="48" height="102" fill="#eeeeee"/><rect x="283" y="243" width="48" height="17" fill="#a3b8cc"/><path d="M293.5 257.3 L296.6 246.4" stroke="#2a2a2a" stroke-width="1.15" shape-rendering="auto"/><path d="M292.5 266.5 L285.5 269.5 L292.5 272.5" fill="none" stroke="#2a2a2a" stroke-width="1.3" shape-rendering="auto"/><path d="M292.5 283.5 L285.5 286.5 L292.5 289.5" fill="none" stroke="#2a2a2a" stroke-width="1.3" shape-rendering="auto"/><rect x="295" y="285" width="7" height="1" fill="#2a2a2a"/><rect x="295" y="288" width="7" height="1" fill="#2a2a2a"/><rect x="285" y="302" width="7" height="1" fill="#2a2a2a"/><rect x="285" y="305" width="7" height="1" fill="#2a2a2a"/><path d="M286.5 317.5 L293.5 320.5 L286.5 323.5" fill="none" stroke="#2a2a2a" stroke-width="1.3" shape-rendering="auto"/><rect x="295" y="319" width="7" height="1" fill="#2a2a2a"/><rect x="295" y="322" width="7" height="1" fill="#2a2a2a"/><path d="M286.5 334.5 L293.5 337.5 L286.5 340.5" fill="none" stroke="#2a2a2a" stroke-width="1.3" shape-rendering="auto"/></svg>
<div style="position:absolute;left:0;top:0;width:774px;height:442px;filter:url(#thr)"><div class="t" style="left:284.00px;top:242px;font-size:13px;font-weight:bold;color:#2a2a2a;">n</div><div class="t" style="left:300.00px;top:242px;font-size:13px;font-weight:bold;color:#2a2a2a;transform:scaleX(0.7500);">a</div></div>
</body></html>
